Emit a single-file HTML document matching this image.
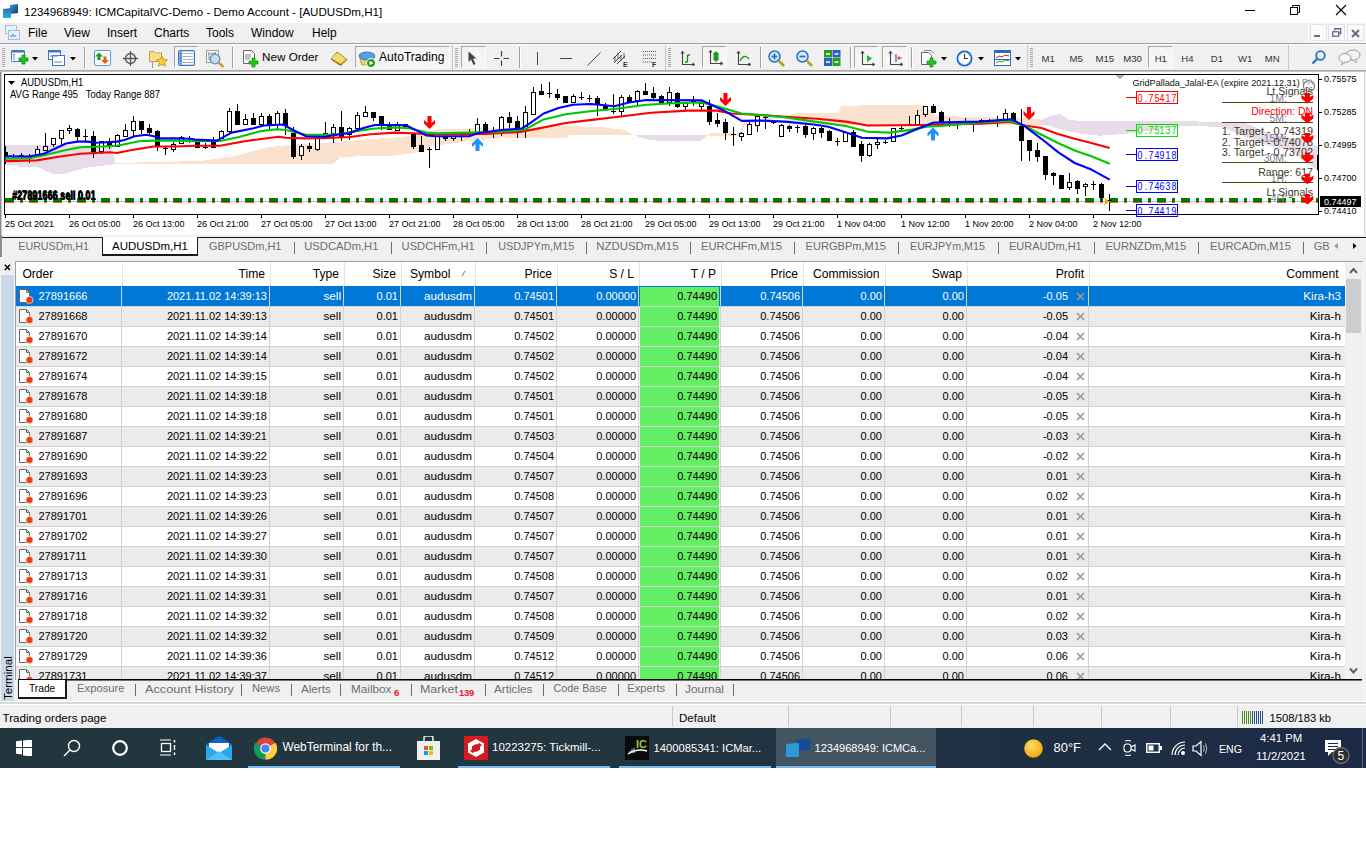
<!DOCTYPE html>
<html><head><meta charset="utf-8"><title>MT4</title>
<style>
html,body{margin:0;padding:0;width:1366px;height:842px;overflow:hidden;background:#fff;}
body{position:relative;font-family:"Liberation Sans",sans-serif;}
.r{position:absolute;display:block;}
.t{position:absolute;line-height:1;white-space:nowrap;}
</style></head><body>
<div class="r" style="left:0px;top:0px;width:1366px;height:23px;background:#fff;"></div><svg class="r" style="left:2px;top:4px" width="17" height="15" viewBox="0 0 17 15">
<defs><linearGradient id="ic1" x1="0" y1="0" x2="1" y2="1"><stop offset="0" stop-color="#4a90d0"/><stop offset="1" stop-color="#0a3a78"/></linearGradient>
<linearGradient id="ic2" x1="0" y1="0" x2="0" y2="1"><stop offset="0" stop-color="#2a70b8"/><stop offset="1" stop-color="#20b0e0"/></linearGradient></defs>
<path d="M8 1 L16 0 L16 9 L8 10 Z" fill="url(#ic1)"/><path d="M1 5 L9 4 L9 14 L1 14 Z" fill="url(#ic2)"/></svg><div class="t" style="top:6.18px;font-size:11.6px;color:#000;font-family:'Liberation Sans',sans-serif;left:24px;">1234968949: ICMCapitalVC-Demo - Demo Account - [AUDUSDm,H1]</div><div class="r" style="left:1245px;top:10px;width:10px;height:1px;background:#000;"></div><svg class="r" style="left:1289px;top:4px" width="12" height="12" viewBox="0 0 12 12"><rect x="1.5" y="3.5" width="7" height="7" fill="none" stroke="#000"/><path d="M3.5 3.5 V1.5 H10.5 V8.5 H8.5" fill="none" stroke="#000"/></svg><svg class="r" style="left:1335px;top:4px" width="12" height="12" viewBox="0 0 12 12"><path d="M1 1 L11 11 M11 1 L1 11" stroke="#000" stroke-width="1.1"/></svg><div class="r" style="left:0px;top:23px;width:1366px;height:20px;background:#f0f0f0;"></div><div class="r" style="left:1308px;top:23px;width:58px;height:20px;background:#f7f7f7;"></div><svg class="r" style="left:5px;top:25px" width="15" height="15" viewBox="0 0 15 15"><rect x="0.5" y="0.5" width="11" height="8" fill="#e8f0fa" stroke="#5a8fd0" stroke-dasharray="1 1"/><rect x="3.5" y="5.5" width="11" height="9" fill="#e8f0fa" stroke="#5a8fd0" stroke-dasharray="1 1"/><path d="M5 10 l1.5 2 l1.5 -3 l1.5 3 l1.5 -2" stroke="#3a6fc0" fill="none" stroke-width="0.8"/></svg><div class="t" style="top:26.84px;font-size:12px;color:#000;font-family:'Liberation Sans',sans-serif;left:28px;">File</div><div class="t" style="top:26.84px;font-size:12px;color:#000;font-family:'Liberation Sans',sans-serif;left:64px;">View</div><div class="t" style="top:26.84px;font-size:12px;color:#000;font-family:'Liberation Sans',sans-serif;left:107px;">Insert</div><div class="t" style="top:26.84px;font-size:12px;color:#000;font-family:'Liberation Sans',sans-serif;left:154px;">Charts</div><div class="t" style="top:26.84px;font-size:12px;color:#000;font-family:'Liberation Sans',sans-serif;left:206px;">Tools</div><div class="t" style="top:26.84px;font-size:12px;color:#000;font-family:'Liberation Sans',sans-serif;left:251px;">Window</div><div class="t" style="top:26.84px;font-size:12px;color:#000;font-family:'Liberation Sans',sans-serif;left:312px;">Help</div><div class="r" style="left:1310px;top:24px;width:17px;height:17px;background:#fafafa;border:1px solid #e3e3e3;box-sizing:border-box;"></div><div class="r" style="left:1328px;top:24px;width:17px;height:17px;background:#fafafa;border:1px solid #e3e3e3;box-sizing:border-box;"></div><div class="r" style="left:1347px;top:24px;width:17px;height:17px;background:#fafafa;border:1px solid #e3e3e3;box-sizing:border-box;"></div><div class="r" style="left:1314px;top:35px;width:6px;height:2px;background:#5b6f86;"></div><svg class="r" style="left:1332px;top:28px" width="10" height="10" viewBox="0 0 10 10"><rect x="0.75" y="3.75" width="6" height="4.5" fill="none" stroke="#5b6f86" stroke-width="1.3"/><path d="M2.75 2.5 V0.75 H8.75 V5.5 H7" fill="none" stroke="#5b6f86" stroke-width="1.3"/></svg><svg class="r" style="left:1351px;top:29px" width="9" height="9" viewBox="0 0 9 9"><path d="M1 1 L8 8 M8 1 L1 8" stroke="#5b6f86" stroke-width="2"/></svg><div class="r" style="left:0px;top:43px;width:1366px;height:1px;background:#a0a0a0;"></div><div class="r" style="left:0px;top:44px;width:1366px;height:1px;background:#fdfdfd;"></div><div class="r" style="left:0px;top:45px;width:1366px;height:25px;background:#f0f0f0;"></div><div class="r" style="left:0px;top:70px;width:1366px;height:1px;background:#a8a8a8;"></div><div class="r" style="left:452px;top:45px;width:1px;height:25px;background:#c8c8c8;"></div><div class="r" style="left:665px;top:45px;width:1px;height:25px;background:#c8c8c8;"></div><div class="r" style="left:1027px;top:45px;width:1px;height:25px;background:#c8c8c8;"></div><div class="r" style="left:1288px;top:45px;width:1px;height:25px;background:#c8c8c8;"></div><div class="r" style="left:2px;top:48px;width:3px;height:1px;background:#a8a8a8;"></div><div class="r" style="left:2px;top:50px;width:3px;height:1px;background:#a8a8a8;"></div><div class="r" style="left:2px;top:52px;width:3px;height:1px;background:#a8a8a8;"></div><div class="r" style="left:2px;top:54px;width:3px;height:1px;background:#a8a8a8;"></div><div class="r" style="left:2px;top:56px;width:3px;height:1px;background:#a8a8a8;"></div><div class="r" style="left:2px;top:58px;width:3px;height:1px;background:#a8a8a8;"></div><div class="r" style="left:2px;top:60px;width:3px;height:1px;background:#a8a8a8;"></div><div class="r" style="left:2px;top:62px;width:3px;height:1px;background:#a8a8a8;"></div><div class="r" style="left:2px;top:64px;width:3px;height:1px;background:#a8a8a8;"></div><div class="r" style="left:2px;top:66px;width:3px;height:1px;background:#a8a8a8;"></div><div class="r" style="left:455px;top:48px;width:3px;height:1px;background:#a8a8a8;"></div><div class="r" style="left:455px;top:50px;width:3px;height:1px;background:#a8a8a8;"></div><div class="r" style="left:455px;top:52px;width:3px;height:1px;background:#a8a8a8;"></div><div class="r" style="left:455px;top:54px;width:3px;height:1px;background:#a8a8a8;"></div><div class="r" style="left:455px;top:56px;width:3px;height:1px;background:#a8a8a8;"></div><div class="r" style="left:455px;top:58px;width:3px;height:1px;background:#a8a8a8;"></div><div class="r" style="left:455px;top:60px;width:3px;height:1px;background:#a8a8a8;"></div><div class="r" style="left:455px;top:62px;width:3px;height:1px;background:#a8a8a8;"></div><div class="r" style="left:455px;top:64px;width:3px;height:1px;background:#a8a8a8;"></div><div class="r" style="left:455px;top:66px;width:3px;height:1px;background:#a8a8a8;"></div><div class="r" style="left:668px;top:48px;width:3px;height:1px;background:#a8a8a8;"></div><div class="r" style="left:668px;top:50px;width:3px;height:1px;background:#a8a8a8;"></div><div class="r" style="left:668px;top:52px;width:3px;height:1px;background:#a8a8a8;"></div><div class="r" style="left:668px;top:54px;width:3px;height:1px;background:#a8a8a8;"></div><div class="r" style="left:668px;top:56px;width:3px;height:1px;background:#a8a8a8;"></div><div class="r" style="left:668px;top:58px;width:3px;height:1px;background:#a8a8a8;"></div><div class="r" style="left:668px;top:60px;width:3px;height:1px;background:#a8a8a8;"></div><div class="r" style="left:668px;top:62px;width:3px;height:1px;background:#a8a8a8;"></div><div class="r" style="left:668px;top:64px;width:3px;height:1px;background:#a8a8a8;"></div><div class="r" style="left:668px;top:66px;width:3px;height:1px;background:#a8a8a8;"></div><div class="r" style="left:1030px;top:48px;width:3px;height:1px;background:#a8a8a8;"></div><div class="r" style="left:1030px;top:50px;width:3px;height:1px;background:#a8a8a8;"></div><div class="r" style="left:1030px;top:52px;width:3px;height:1px;background:#a8a8a8;"></div><div class="r" style="left:1030px;top:54px;width:3px;height:1px;background:#a8a8a8;"></div><div class="r" style="left:1030px;top:56px;width:3px;height:1px;background:#a8a8a8;"></div><div class="r" style="left:1030px;top:58px;width:3px;height:1px;background:#a8a8a8;"></div><div class="r" style="left:1030px;top:60px;width:3px;height:1px;background:#a8a8a8;"></div><div class="r" style="left:1030px;top:62px;width:3px;height:1px;background:#a8a8a8;"></div><div class="r" style="left:1030px;top:64px;width:3px;height:1px;background:#a8a8a8;"></div><div class="r" style="left:1030px;top:66px;width:3px;height:1px;background:#a8a8a8;"></div><svg class="r" style="left:11px;top:50px" width="18" height="16" viewBox="0 0 18 16"><rect x="0.5" y="0.5" width="13" height="11" rx="1" fill="#fff" stroke="#3c78c0"/><rect x="0.5" y="0.5" width="13" height="2" fill="#3c78c0"/><path d="M3 4 V10 M2 5 l1 -1 l1 1" stroke="#6a8ab0" fill="none"/><path d="M11 5 H14 V8 H17 V11 H14 V14 H11 V11 H8 V8 H11 Z" fill="#1ec81e" stroke="#0a8a0a" stroke-width="0.8"/></svg><svg class="r" style="left:32px;top:57px" width="6" height="4" viewBox="0 0 6 4"><path d="M0 0 H6 L3 3.5 Z" fill="#000"/></svg><svg class="r" style="left:48px;top:50px" width="17" height="16" viewBox="0 0 17 16"><rect x="0.5" y="0.5" width="12" height="9" fill="#fff" stroke="#3c78c0"/><rect x="0.5" y="0.5" width="12" height="2" fill="#3c78c0"/><rect x="4.5" y="5.5" width="12" height="10" fill="#fff" stroke="#3c78c0"/><path d="M2 6 H10 M6 12 H14" stroke="#6a8ab0"/></svg><svg class="r" style="left:70px;top:57px" width="6" height="4" viewBox="0 0 6 4"><path d="M0 0 H6 L3 3.5 Z" fill="#000"/></svg><div class="r" style="left:84px;top:47px;width:1px;height:21px;background:#a0a0a0;"></div><div class="r" style="left:85px;top:47px;width:1px;height:21px;background:#ffffff;"></div><svg class="r" style="left:94px;top:50px" width="17" height="16" viewBox="0 0 17 16"><rect x="0.5" y="0.5" width="16" height="15" rx="1.5" fill="#fff" stroke="#5a98dc"/><path d="M9 4 H15 M9 7 H15 M2 11 H7 M2 13.5 H7" stroke="#e0e0e0" stroke-dasharray="1 1"/><path d="M5 2.5 L9 6.5 H6.5 V10 H3.5 V6.5 H1 Z" fill="#18a018"/><path d="M11 14 L15 10 H12.5 V6.5 H9.5 V10 H7 Z" fill="#e85828"/></svg><svg class="r" style="left:123px;top:51px" width="16" height="16" viewBox="0 0 16 16"><circle cx="7.5" cy="7.5" r="5" fill="none" stroke="#555" stroke-width="1.3"/><path d="M7.5 0 V15 M0 7.5 H15" stroke="#555" stroke-width="1.3"/></svg><svg class="r" style="left:149px;top:50px" width="20" height="18" viewBox="0 0 20 18"><path d="M0.5 1.5 h4.5 l1.5 1.5 h6 v8.5 h-12 z" fill="#f8e08a" stroke="#c8a040"/><path d="M3.5 12.5 V17.5" stroke="#444" stroke-dasharray="1 1"/><path d="M13 6 l1.7 3.4 l3.8 .5 l-2.8 2.6 l.7 3.7 l-3.4 -1.8 l-3.4 1.8 l.7 -3.7 l-2.8 -2.6 l3.8 -.5 z" fill="#f8d030" stroke="#b88a10" stroke-width="0.8"/></svg><div class="r" style="left:174px;top:46px;width:25px;height:22px;background:#f7f7f7;border:1px solid #fdfdfd;border-top-color:#a8a8a8;border-left-color:#a8a8a8;box-sizing:border-box;background-image:repeating-linear-gradient(45deg,#efefef 0 1px,#fbfbfb 1px 2px);"></div><svg class="r" style="left:178px;top:50px" width="17" height="16" viewBox="0 0 17 16"><rect x="0.6" y="0.6" width="15.8" height="14.8" rx="1.5" fill="#fff" stroke="#3a74c0" stroke-width="1.2"/><rect x="1.2" y="1.2" width="3" height="13.6" fill="#7aa8e0"/><path d="M2.7 3 V13" stroke="#1a3a70" stroke-dasharray="1 1.5"/><path d="M7 3.5 H15 M7 6.5 H15 M7 9.5 H15 M7 12.5 H15" stroke="#9ab8e0"/><path d="M5.5 3.5 h1 M5.5 9.5 h1" stroke="#e02020"/><path d="M5.5 6.5 h1 M5.5 12.5 h1" stroke="#222"/></svg><svg class="r" style="left:206px;top:50px" width="19" height="18" viewBox="0 0 19 18"><rect x="0.5" y="0.5" width="12" height="12" fill="#f6f6f0" stroke="#a0a090"/><path d="M3 2 V10 M9 2 V9 M2 4 L10 3" stroke="#777" stroke-width="0.8"/><circle cx="9" cy="9" r="4.8" fill="#c8dcf0" stroke="#5a88c0" stroke-width="1.3"/><path d="M12.5 12.5 L17.5 17" stroke="#c8a030" stroke-width="2.4"/></svg><div class="r" style="left:232px;top:47px;width:1px;height:21px;background:#a0a0a0;"></div><div class="r" style="left:233px;top:47px;width:1px;height:21px;background:#ffffff;"></div><svg class="r" style="left:243px;top:50px" width="17" height="18" viewBox="0 0 17 18"><path d="M0.5 0.5 h8 l3 3 v10 h-11 z" fill="#fff" stroke="#666"/><path d="M2 5 h6 M2 7 h6 M2 9 h5" stroke="#888"/><path d="M9 8 H12 V11 H15 V14 H12 V17 H9 V14 H6 V11 H9 Z" fill="#22c822" stroke="#0a8a0a" stroke-width="0.7"/></svg><div class="t" style="top:51.10px;font-size:11.7px;color:#000;font-family:'Liberation Sans',sans-serif;left:262px;">New Order</div><svg class="r" style="left:330px;top:50px" width="18" height="17" viewBox="0 0 18 17"><path d="M1 9 L7 2 L17 9.5 L11 15.5 Z" fill="#d8a020" stroke="#906010" stroke-width="0.8"/><path d="M1.5 8.5 L7 2.5 L16 9 L10.5 13.5 Z" fill="#f4d870"/><path d="M1 9 L11 15.5" stroke="#906010" stroke-width="1"/></svg><div class="r" style="left:355px;top:46px;width:95px;height:22px;background:#f7f7f7;border:1px solid #fdfdfd;border-top-color:#a8a8a8;border-left-color:#a8a8a8;box-sizing:border-box;background-image:repeating-linear-gradient(45deg,#efefef 0 1px,#fbfbfb 1px 2px);"></div><svg class="r" style="left:358px;top:50px" width="18" height="18" viewBox="0 0 18 18"><path d="M2 10 Q2 4 9 4 Q16 4 16 10 L14 15 H4 Z" fill="#f0d060" stroke="#b89020" stroke-width="0.8"/><ellipse cx="9" cy="6" rx="8" ry="4" fill="#5aa0e0" stroke="#2a6ab0" stroke-width="0.8"/><circle cx="13" cy="13" r="4.5" fill="#1aa01a" stroke="#fff"/><path d="M11.5 10.8 L15.5 13 L11.5 15.2 Z" fill="#fff"/></svg><div class="t" style="top:50.76px;font-size:12.1px;color:#000;font-family:'Liberation Sans',sans-serif;left:379px;">AutoTrading</div><div class="r" style="left:461px;top:46px;width:25px;height:22px;background:#f7f7f7;border:1px solid #fdfdfd;border-top-color:#a8a8a8;border-left-color:#a8a8a8;box-sizing:border-box;background-image:repeating-linear-gradient(45deg,#efefef 0 1px,#fbfbfb 1px 2px);"></div><svg class="r" style="left:468px;top:51px" width="10" height="15" viewBox="0 0 10 15"><path d="M0.5 0.5 L0.5 11 L3 8.5 L5.5 14 L7.5 13 L5 7.5 L8.5 7.5 Z" fill="#444"/></svg><svg class="r" style="left:494px;top:51px" width="16" height="16" viewBox="0 0 16 16"><path d="M7.5 0 V5.5 M7.5 9.5 V15 M0 7.5 H5.5 M9.5 7.5 H15" stroke="#444" stroke-width="1.2"/></svg><div class="r" style="left:519px;top:47px;width:1px;height:21px;background:#a0a0a0;"></div><div class="r" style="left:520px;top:47px;width:1px;height:21px;background:#ffffff;"></div><div class="r" style="left:537px;top:52px;width:1px;height:13px;background:#444;"></div><div class="r" style="left:560px;top:58px;width:12px;height:1px;background:#444;"></div><svg class="r" style="left:587px;top:52px" width="14" height="14" viewBox="0 0 14 14"><path d="M0.5 13.5 L13.5 0.5" stroke="#444"/></svg><svg class="r" style="left:612px;top:50px" width="18" height="17" viewBox="0 0 18 17"><path d="M1 9 L9 1 M2 13 L10 5 M5 14 L13 6" stroke="#444" stroke-width="1"/><path d="M3 6 v6 M6 3 v6 M9 5 v6 M12 3 v6" stroke="#444" stroke-width="0.8"/><text x="11" y="16.5" font-size="7" font-family="Liberation Sans" font-weight="bold" fill="#333">E</text></svg><svg class="r" style="left:642px;top:50px" width="16" height="17" viewBox="0 0 16 17"><path d="M1 1.5 H15 M1 5 H15 M1 8.5 H15 M1 12 H10" stroke="#555" stroke-dasharray="1 1"/><text x="10" y="16.5" font-size="7" font-family="Liberation Sans" font-weight="bold" fill="#333">F</text></svg><svg class="r" style="left:680px;top:51px" width="15" height="15" viewBox="0 0 15 15"><path d="M2.5 1 V13.5 H14 M1 2.5 l1.5 -2 l1.5 2 M12.5 12 l2 1.5 l-2 1.5" stroke="#444" fill="none" stroke-width="1.1"/><path d="M7.5 4 V11 M7.5 11 H5 M7.5 4 H10" stroke="#0a9a0a" stroke-width="1.3" fill="none"/></svg><div class="r" style="left:702px;top:46px;width:25px;height:22px;background:#f7f7f7;border:1px solid #fdfdfd;border-top-color:#a8a8a8;border-left-color:#a8a8a8;box-sizing:border-box;background-image:repeating-linear-gradient(45deg,#efefef 0 1px,#fbfbfb 1px 2px);"></div><svg class="r" style="left:708px;top:50px" width="15" height="16" viewBox="0 0 15 16"><path d="M2.5 1 V13.5 H14 M1 2.5 l1.5 -2 l1.5 2 M12.5 12 l2 1.5 l-2 1.5" stroke="#444" fill="none" stroke-width="1.1"/><rect x="6" y="3" width="4" height="7" fill="#20c020" stroke="#0a7a0a" stroke-width="0.8"/><path d="M8 1 V12" stroke="#0a7a0a"/></svg><svg class="r" style="left:736px;top:51px" width="15" height="15" viewBox="0 0 15 15"><path d="M2.5 1 V13.5 H14 M1 2.5 l1.5 -2 l1.5 2 M12.5 12 l2 1.5 l-2 1.5" stroke="#444" fill="none" stroke-width="1.1"/><path d="M4 10 Q8 2 13 8" stroke="#1a9a1a" fill="none" stroke-width="1.3"/></svg><div class="r" style="left:760px;top:47px;width:1px;height:21px;background:#a0a0a0;"></div><div class="r" style="left:761px;top:47px;width:1px;height:21px;background:#ffffff;"></div><svg class="r" style="left:768px;top:50px" width="17" height="17" viewBox="0 0 17 17"><circle cx="6.5" cy="6.5" r="5.5" fill="#d8eafc" stroke="#2a70c0" stroke-width="1.5"/><path d="M11 11 L16 16" stroke="#c89a20" stroke-width="2.6"/><path d="M3.5 6.5 H9.5" stroke="#2a70c0" stroke-width="1.8"/><path d="M6.5 3.5 V9.5" stroke="#2a70c0" stroke-width="1.8"/></svg><svg class="r" style="left:796px;top:50px" width="17" height="17" viewBox="0 0 17 17"><circle cx="6.5" cy="6.5" r="5.5" fill="#d8eafc" stroke="#2a70c0" stroke-width="1.5"/><path d="M11 11 L16 16" stroke="#c89a20" stroke-width="2.6"/><path d="M3.5 6.5 H9.5" stroke="#2a70c0" stroke-width="1.8"/></svg><svg class="r" style="left:824px;top:50px" width="17" height="16" viewBox="0 0 17 16"><rect x="0" y="0" width="8" height="7.5" fill="#22a022"/><rect x="8.5" y="0" width="8" height="7.5" fill="#2a60c8"/><rect x="0" y="8" width="8" height="8" fill="#2a60c8"/><rect x="8.5" y="8" width="8" height="8" fill="#22a022"/><path d="M2 4 H6 M10.5 4 H14.5 M2 12 H6 M10.5 12 H14.5" stroke="#fff" stroke-width="1.5"/></svg><div class="r" style="left:850px;top:47px;width:1px;height:21px;background:#a0a0a0;"></div><div class="r" style="left:851px;top:47px;width:1px;height:21px;background:#ffffff;"></div><div class="r" style="left:854px;top:46px;width:25px;height:22px;background:#f7f7f7;border:1px solid #fdfdfd;border-top-color:#a8a8a8;border-left-color:#a8a8a8;box-sizing:border-box;background-image:repeating-linear-gradient(45deg,#efefef 0 1px,#fbfbfb 1px 2px);"></div><svg class="r" style="left:860px;top:51px" width="15" height="15" viewBox="0 0 15 15"><path d="M2.5 1 V13.5 H14 M1 2.5 l1.5 -2 l1.5 2 M12.5 12 l2 1.5 l-2 1.5" stroke="#444" fill="none" stroke-width="1.1"/><path d="M7 4 L12 7.5 L7 11 Z" fill="#22b022"/></svg><div class="r" style="left:882px;top:46px;width:25px;height:22px;background:#f7f7f7;border:1px solid #fdfdfd;border-top-color:#a8a8a8;border-left-color:#a8a8a8;box-sizing:border-box;background-image:repeating-linear-gradient(45deg,#efefef 0 1px,#fbfbfb 1px 2px);"></div><svg class="r" style="left:888px;top:51px" width="15" height="15" viewBox="0 0 15 15"><path d="M2.5 1 V13.5 H14 M1 2.5 l1.5 -2 l1.5 2 M12.5 12 l2 1.5 l-2 1.5" stroke="#444" fill="none" stroke-width="1.1"/><path d="M8 3 V11" stroke="#2a60c0" stroke-width="1.2"/><path d="M14 7 H10 M11.5 5.5 L10 7 L11.5 8.5" stroke="#e04010" stroke-width="1.2" fill="none"/></svg><div class="r" style="left:911px;top:47px;width:1px;height:21px;background:#a0a0a0;"></div><div class="r" style="left:912px;top:47px;width:1px;height:21px;background:#ffffff;"></div><svg class="r" style="left:921px;top:50px" width="18" height="18" viewBox="0 0 18 18"><path d="M0.5 2.5 h7 l3 3 v9 h-10 z" fill="#fff" stroke="#666"/><path d="M3 0.5 h7 l3 3" fill="none" stroke="#888"/><path d="M9 8 H12 V11 H15 V14 H12 V17 H9 V14 H6 V11 H9 Z" fill="#22c822" stroke="#0a8a0a" stroke-width="0.7"/></svg><svg class="r" style="left:941px;top:57px" width="6" height="4" viewBox="0 0 6 4"><path d="M0 0 H6 L3 3.5 Z" fill="#000"/></svg><svg class="r" style="left:956px;top:50px" width="17" height="17" viewBox="0 0 17 17"><circle cx="8.5" cy="8.5" r="8" fill="#1a6ad0"/><circle cx="8.5" cy="8.5" r="6" fill="#fff" stroke="#a8c8f0"/><path d="M8.5 4 V8.5 H12" stroke="#333" stroke-width="1.1" fill="none"/></svg><svg class="r" style="left:978px;top:57px" width="6" height="4" viewBox="0 0 6 4"><path d="M0 0 H6 L3 3.5 Z" fill="#000"/></svg><svg class="r" style="left:994px;top:50px" width="17" height="16" viewBox="0 0 17 16"><rect x="0.5" y="0.5" width="16" height="15" fill="#fff" stroke="#2a6ac0"/><rect x="0.5" y="0.5" width="16" height="2.5" fill="#2a6ac0"/><path d="M2 8 l3 -2 l3 1 l3 -2 l4 1" stroke="#c02020" fill="none"/><path d="M2 13 l3 -2 l3 1 l3 -2 l4 1" stroke="#20a020" fill="none"/><path d="M1 9.5 H16" stroke="#2a6ac0"/></svg><svg class="r" style="left:1015px;top:57px" width="6" height="4" viewBox="0 0 6 4"><path d="M0 0 H6 L3 3.5 Z" fill="#000"/></svg><div class="t" style="top:53.87px;font-size:9.6px;color:#333;font-family:'Liberation Sans',sans-serif;left:1041.6px;">M1</div><div class="t" style="top:53.87px;font-size:9.6px;color:#333;font-family:'Liberation Sans',sans-serif;left:1069.4px;">M5</div><div class="t" style="top:53.87px;font-size:9.6px;color:#333;font-family:'Liberation Sans',sans-serif;left:1095.5px;">M15</div><div class="t" style="top:53.87px;font-size:9.6px;color:#333;font-family:'Liberation Sans',sans-serif;left:1123.3px;">M30</div><div class="r" style="left:1148px;top:46px;width:25px;height:22px;background:#f7f7f7;border:1px solid #fdfdfd;border-top-color:#a8a8a8;border-left-color:#a8a8a8;box-sizing:border-box;background-image:repeating-linear-gradient(45deg,#efefef 0 1px,#fbfbfb 1px 2px);"></div><div class="t" style="top:53.87px;font-size:9.6px;color:#333;font-family:'Liberation Sans',sans-serif;left:1154.7px;">H1</div><div class="t" style="top:53.87px;font-size:9.6px;color:#333;font-family:'Liberation Sans',sans-serif;left:1181.3px;">H4</div><div class="t" style="top:53.87px;font-size:9.6px;color:#333;font-family:'Liberation Sans',sans-serif;left:1210.8px;">D1</div><div class="t" style="top:53.87px;font-size:9.6px;color:#333;font-family:'Liberation Sans',sans-serif;left:1237.9px;">W1</div><div class="t" style="top:53.87px;font-size:9.6px;color:#333;font-family:'Liberation Sans',sans-serif;left:1264.8px;">MN</div><svg class="r" style="left:1311px;top:50px" width="15" height="15" viewBox="0 0 15 15"><circle cx="9.5" cy="5.5" r="4.3" fill="none" stroke="#2a70d0" stroke-width="1.8"/><path d="M6.5 8.5 L1.5 13.5" stroke="#2a70d0" stroke-width="2.4"/></svg><svg class="r" style="left:1338px;top:49px" width="23" height="16" viewBox="0 0 23 16"><ellipse cx="15" cy="6" rx="7" ry="5" fill="#f4f4f4" stroke="#999"/><path d="M17 10 l2 4 l-4 -3" fill="#f4f4f4" stroke="#999" stroke-width="0.8"/><ellipse cx="7" cy="9" rx="6" ry="4.5" fill="#f8f8f8" stroke="#999"/><path d="M5 13 l-2 3 l4 -2.5" fill="#f8f8f8" stroke="#999" stroke-width="0.8"/></svg><div class="r" style="left:0px;top:71px;width:1366px;height:166px;background:#f0f0f0;"></div><div class="r" style="left:0px;top:71px;width:1366px;height:1px;background:#c4c4c4;"></div><div class="r" style="left:0px;top:72px;width:1px;height:165px;background:#8c8c8c;"></div><div class="r" style="left:1px;top:72px;width:1px;height:165px;background:#c8c8c8;"></div><div class="r" style="left:2px;top:72px;width:1362px;height:163px;background:#ffffff;"></div><div class="r" style="left:1364px;top:72px;width:1px;height:163px;background:#dcdcdc;"></div><svg class="r" style="left:0;top:0" width="1366" height="240" viewBox="0 0 1366 240" shape-rendering="crispEdges"><polygon points="116.0,163.0 200.0,161.0 235.0,156.0 269.0,147.0 303.0,144.0 337.0,142.0 370.0,139.0 404.0,137.0 440.0,129.0 500.0,128.0 560.0,126.0 600.0,127.0 625.0,130.0 633.0,134.5 708.0,134.5 712.0,132.6 739.0,132.6 745.0,121.0 780.0,116.5 799.0,113.0 838.0,112.8 842.0,105.5 860.0,105.5 900.0,105.0 925.0,105.5 935.0,116.0 980.0,117.0 1040.0,118.9 1048.0,123.0 1048.0,124.5 800.0,124.5 780.0,118.0 745.0,125.2 739.0,135.5 708.0,135.5 633.0,134.5 570.0,134.8 566.0,138.4 501.0,138.4 478.0,140.0 434.0,145.7 415.0,153.0 390.0,156.0 341.0,156.7 334.0,164.0 116.0,164.0" fill="#fbe2cf"/><polygon points="5.0,145.2 111.0,145.2 116.0,164.0 84.0,168.0 64.0,174.0 53.0,174.0 38.0,167.4 20.0,167.4 15.0,164.5 5.0,164.5" fill="#e6dde9"/><polygon points="633.0,135.0 708.0,135.0 700.0,141.0 660.0,141.3 645.0,139.0" fill="#e6dde9"/><polygon points="1040.0,120.5 1050.0,116.0 1060.0,114.0 1069.0,119.5 1081.0,121.2 1170.0,121.2 1244.0,122.0 1270.0,134.0 1305.0,140.0 1318.0,147.0 1318.0,171.0 1290.0,150.0 1266.0,145.0 1248.0,138.0 1222.0,127.0 1178.0,125.5 1136.0,133.0 1100.0,135.7 1081.0,134.0 1060.0,129.0 1040.0,123.6" fill="#e6dde9"/><rect x="5" y="201" width="1313" height="1" fill="#c0c0c0"/><rect x="5" y="198" width="9" height="4" fill="#037a03"/><rect x="5" y="202" width="9" height="1" fill="#ff4a10"/><rect x="20" y="198" width="3" height="4" fill="#037a03"/><rect x="20" y="202" width="3" height="1" fill="#ff4a10"/><rect x="29" y="198" width="9" height="4" fill="#037a03"/><rect x="29" y="202" width="9" height="1" fill="#ff4a10"/><rect x="44" y="198" width="3" height="4" fill="#037a03"/><rect x="44" y="202" width="3" height="1" fill="#ff4a10"/><rect x="53" y="198" width="9" height="4" fill="#037a03"/><rect x="53" y="202" width="9" height="1" fill="#ff4a10"/><rect x="68" y="198" width="3" height="4" fill="#037a03"/><rect x="68" y="202" width="3" height="1" fill="#ff4a10"/><rect x="77" y="198" width="9" height="4" fill="#037a03"/><rect x="77" y="202" width="9" height="1" fill="#ff4a10"/><rect x="92" y="198" width="3" height="4" fill="#037a03"/><rect x="92" y="202" width="3" height="1" fill="#ff4a10"/><rect x="101" y="198" width="9" height="4" fill="#037a03"/><rect x="101" y="202" width="9" height="1" fill="#ff4a10"/><rect x="116" y="198" width="3" height="4" fill="#037a03"/><rect x="116" y="202" width="3" height="1" fill="#ff4a10"/><rect x="125" y="198" width="9" height="4" fill="#037a03"/><rect x="125" y="202" width="9" height="1" fill="#ff4a10"/><rect x="140" y="198" width="3" height="4" fill="#037a03"/><rect x="140" y="202" width="3" height="1" fill="#ff4a10"/><rect x="149" y="198" width="9" height="4" fill="#037a03"/><rect x="149" y="202" width="9" height="1" fill="#ff4a10"/><rect x="164" y="198" width="3" height="4" fill="#037a03"/><rect x="164" y="202" width="3" height="1" fill="#ff4a10"/><rect x="173" y="198" width="9" height="4" fill="#037a03"/><rect x="173" y="202" width="9" height="1" fill="#ff4a10"/><rect x="188" y="198" width="3" height="4" fill="#037a03"/><rect x="188" y="202" width="3" height="1" fill="#ff4a10"/><rect x="197" y="198" width="9" height="4" fill="#037a03"/><rect x="197" y="202" width="9" height="1" fill="#ff4a10"/><rect x="212" y="198" width="3" height="4" fill="#037a03"/><rect x="212" y="202" width="3" height="1" fill="#ff4a10"/><rect x="221" y="198" width="9" height="4" fill="#037a03"/><rect x="221" y="202" width="9" height="1" fill="#ff4a10"/><rect x="236" y="198" width="3" height="4" fill="#037a03"/><rect x="236" y="202" width="3" height="1" fill="#ff4a10"/><rect x="245" y="198" width="9" height="4" fill="#037a03"/><rect x="245" y="202" width="9" height="1" fill="#ff4a10"/><rect x="260" y="198" width="3" height="4" fill="#037a03"/><rect x="260" y="202" width="3" height="1" fill="#ff4a10"/><rect x="269" y="198" width="9" height="4" fill="#037a03"/><rect x="269" y="202" width="9" height="1" fill="#ff4a10"/><rect x="284" y="198" width="3" height="4" fill="#037a03"/><rect x="284" y="202" width="3" height="1" fill="#ff4a10"/><rect x="293" y="198" width="9" height="4" fill="#037a03"/><rect x="293" y="202" width="9" height="1" fill="#ff4a10"/><rect x="308" y="198" width="3" height="4" fill="#037a03"/><rect x="308" y="202" width="3" height="1" fill="#ff4a10"/><rect x="317" y="198" width="9" height="4" fill="#037a03"/><rect x="317" y="202" width="9" height="1" fill="#ff4a10"/><rect x="332" y="198" width="3" height="4" fill="#037a03"/><rect x="332" y="202" width="3" height="1" fill="#ff4a10"/><rect x="341" y="198" width="9" height="4" fill="#037a03"/><rect x="341" y="202" width="9" height="1" fill="#ff4a10"/><rect x="356" y="198" width="3" height="4" fill="#037a03"/><rect x="356" y="202" width="3" height="1" fill="#ff4a10"/><rect x="365" y="198" width="9" height="4" fill="#037a03"/><rect x="365" y="202" width="9" height="1" fill="#ff4a10"/><rect x="380" y="198" width="3" height="4" fill="#037a03"/><rect x="380" y="202" width="3" height="1" fill="#ff4a10"/><rect x="389" y="198" width="9" height="4" fill="#037a03"/><rect x="389" y="202" width="9" height="1" fill="#ff4a10"/><rect x="404" y="198" width="3" height="4" fill="#037a03"/><rect x="404" y="202" width="3" height="1" fill="#ff4a10"/><rect x="413" y="198" width="9" height="4" fill="#037a03"/><rect x="413" y="202" width="9" height="1" fill="#ff4a10"/><rect x="428" y="198" width="3" height="4" fill="#037a03"/><rect x="428" y="202" width="3" height="1" fill="#ff4a10"/><rect x="437" y="198" width="9" height="4" fill="#037a03"/><rect x="437" y="202" width="9" height="1" fill="#ff4a10"/><rect x="452" y="198" width="3" height="4" fill="#037a03"/><rect x="452" y="202" width="3" height="1" fill="#ff4a10"/><rect x="461" y="198" width="9" height="4" fill="#037a03"/><rect x="461" y="202" width="9" height="1" fill="#ff4a10"/><rect x="476" y="198" width="3" height="4" fill="#037a03"/><rect x="476" y="202" width="3" height="1" fill="#ff4a10"/><rect x="485" y="198" width="9" height="4" fill="#037a03"/><rect x="485" y="202" width="9" height="1" fill="#ff4a10"/><rect x="500" y="198" width="3" height="4" fill="#037a03"/><rect x="500" y="202" width="3" height="1" fill="#ff4a10"/><rect x="509" y="198" width="9" height="4" fill="#037a03"/><rect x="509" y="202" width="9" height="1" fill="#ff4a10"/><rect x="524" y="198" width="3" height="4" fill="#037a03"/><rect x="524" y="202" width="3" height="1" fill="#ff4a10"/><rect x="533" y="198" width="9" height="4" fill="#037a03"/><rect x="533" y="202" width="9" height="1" fill="#ff4a10"/><rect x="548" y="198" width="3" height="4" fill="#037a03"/><rect x="548" y="202" width="3" height="1" fill="#ff4a10"/><rect x="557" y="198" width="9" height="4" fill="#037a03"/><rect x="557" y="202" width="9" height="1" fill="#ff4a10"/><rect x="572" y="198" width="3" height="4" fill="#037a03"/><rect x="572" y="202" width="3" height="1" fill="#ff4a10"/><rect x="581" y="198" width="9" height="4" fill="#037a03"/><rect x="581" y="202" width="9" height="1" fill="#ff4a10"/><rect x="596" y="198" width="3" height="4" fill="#037a03"/><rect x="596" y="202" width="3" height="1" fill="#ff4a10"/><rect x="605" y="198" width="9" height="4" fill="#037a03"/><rect x="605" y="202" width="9" height="1" fill="#ff4a10"/><rect x="620" y="198" width="3" height="4" fill="#037a03"/><rect x="620" y="202" width="3" height="1" fill="#ff4a10"/><rect x="629" y="198" width="9" height="4" fill="#037a03"/><rect x="629" y="202" width="9" height="1" fill="#ff4a10"/><rect x="644" y="198" width="3" height="4" fill="#037a03"/><rect x="644" y="202" width="3" height="1" fill="#ff4a10"/><rect x="653" y="198" width="9" height="4" fill="#037a03"/><rect x="653" y="202" width="9" height="1" fill="#ff4a10"/><rect x="668" y="198" width="3" height="4" fill="#037a03"/><rect x="668" y="202" width="3" height="1" fill="#ff4a10"/><rect x="677" y="198" width="9" height="4" fill="#037a03"/><rect x="677" y="202" width="9" height="1" fill="#ff4a10"/><rect x="692" y="198" width="3" height="4" fill="#037a03"/><rect x="692" y="202" width="3" height="1" fill="#ff4a10"/><rect x="701" y="198" width="9" height="4" fill="#037a03"/><rect x="701" y="202" width="9" height="1" fill="#ff4a10"/><rect x="716" y="198" width="3" height="4" fill="#037a03"/><rect x="716" y="202" width="3" height="1" fill="#ff4a10"/><rect x="725" y="198" width="9" height="4" fill="#037a03"/><rect x="725" y="202" width="9" height="1" fill="#ff4a10"/><rect x="740" y="198" width="3" height="4" fill="#037a03"/><rect x="740" y="202" width="3" height="1" fill="#ff4a10"/><rect x="749" y="198" width="9" height="4" fill="#037a03"/><rect x="749" y="202" width="9" height="1" fill="#ff4a10"/><rect x="764" y="198" width="3" height="4" fill="#037a03"/><rect x="764" y="202" width="3" height="1" fill="#ff4a10"/><rect x="773" y="198" width="9" height="4" fill="#037a03"/><rect x="773" y="202" width="9" height="1" fill="#ff4a10"/><rect x="788" y="198" width="3" height="4" fill="#037a03"/><rect x="788" y="202" width="3" height="1" fill="#ff4a10"/><rect x="797" y="198" width="9" height="4" fill="#037a03"/><rect x="797" y="202" width="9" height="1" fill="#ff4a10"/><rect x="812" y="198" width="3" height="4" fill="#037a03"/><rect x="812" y="202" width="3" height="1" fill="#ff4a10"/><rect x="821" y="198" width="9" height="4" fill="#037a03"/><rect x="821" y="202" width="9" height="1" fill="#ff4a10"/><rect x="836" y="198" width="3" height="4" fill="#037a03"/><rect x="836" y="202" width="3" height="1" fill="#ff4a10"/><rect x="845" y="198" width="9" height="4" fill="#037a03"/><rect x="845" y="202" width="9" height="1" fill="#ff4a10"/><rect x="860" y="198" width="3" height="4" fill="#037a03"/><rect x="860" y="202" width="3" height="1" fill="#ff4a10"/><rect x="869" y="198" width="9" height="4" fill="#037a03"/><rect x="869" y="202" width="9" height="1" fill="#ff4a10"/><rect x="884" y="198" width="3" height="4" fill="#037a03"/><rect x="884" y="202" width="3" height="1" fill="#ff4a10"/><rect x="893" y="198" width="9" height="4" fill="#037a03"/><rect x="893" y="202" width="9" height="1" fill="#ff4a10"/><rect x="908" y="198" width="3" height="4" fill="#037a03"/><rect x="908" y="202" width="3" height="1" fill="#ff4a10"/><rect x="917" y="198" width="9" height="4" fill="#037a03"/><rect x="917" y="202" width="9" height="1" fill="#ff4a10"/><rect x="932" y="198" width="3" height="4" fill="#037a03"/><rect x="932" y="202" width="3" height="1" fill="#ff4a10"/><rect x="941" y="198" width="9" height="4" fill="#037a03"/><rect x="941" y="202" width="9" height="1" fill="#ff4a10"/><rect x="956" y="198" width="3" height="4" fill="#037a03"/><rect x="956" y="202" width="3" height="1" fill="#ff4a10"/><rect x="965" y="198" width="9" height="4" fill="#037a03"/><rect x="965" y="202" width="9" height="1" fill="#ff4a10"/><rect x="980" y="198" width="3" height="4" fill="#037a03"/><rect x="980" y="202" width="3" height="1" fill="#ff4a10"/><rect x="989" y="198" width="9" height="4" fill="#037a03"/><rect x="989" y="202" width="9" height="1" fill="#ff4a10"/><rect x="1004" y="198" width="3" height="4" fill="#037a03"/><rect x="1004" y="202" width="3" height="1" fill="#ff4a10"/><rect x="1013" y="198" width="9" height="4" fill="#037a03"/><rect x="1013" y="202" width="9" height="1" fill="#ff4a10"/><rect x="1028" y="198" width="3" height="4" fill="#037a03"/><rect x="1028" y="202" width="3" height="1" fill="#ff4a10"/><rect x="1037" y="198" width="9" height="4" fill="#037a03"/><rect x="1037" y="202" width="9" height="1" fill="#ff4a10"/><rect x="1052" y="198" width="3" height="4" fill="#037a03"/><rect x="1052" y="202" width="3" height="1" fill="#ff4a10"/><rect x="1061" y="198" width="9" height="4" fill="#037a03"/><rect x="1061" y="202" width="9" height="1" fill="#ff4a10"/><rect x="1076" y="198" width="3" height="4" fill="#037a03"/><rect x="1076" y="202" width="3" height="1" fill="#ff4a10"/><rect x="1085" y="198" width="9" height="4" fill="#037a03"/><rect x="1085" y="202" width="9" height="1" fill="#ff4a10"/><rect x="1100" y="198" width="3" height="4" fill="#037a03"/><rect x="1100" y="202" width="3" height="1" fill="#ff4a10"/><rect x="1109" y="198" width="9" height="4" fill="#037a03"/><rect x="1109" y="202" width="9" height="1" fill="#ff4a10"/><rect x="1124" y="198" width="3" height="4" fill="#037a03"/><rect x="1124" y="202" width="3" height="1" fill="#ff4a10"/><rect x="1133" y="198" width="9" height="4" fill="#037a03"/><rect x="1133" y="202" width="9" height="1" fill="#ff4a10"/><rect x="1148" y="198" width="3" height="4" fill="#037a03"/><rect x="1148" y="202" width="3" height="1" fill="#ff4a10"/><rect x="1157" y="198" width="9" height="4" fill="#037a03"/><rect x="1157" y="202" width="9" height="1" fill="#ff4a10"/><rect x="1172" y="198" width="3" height="4" fill="#037a03"/><rect x="1172" y="202" width="3" height="1" fill="#ff4a10"/><rect x="1181" y="198" width="9" height="4" fill="#037a03"/><rect x="1181" y="202" width="9" height="1" fill="#ff4a10"/><rect x="1196" y="198" width="3" height="4" fill="#037a03"/><rect x="1196" y="202" width="3" height="1" fill="#ff4a10"/><rect x="1205" y="198" width="9" height="4" fill="#037a03"/><rect x="1205" y="202" width="9" height="1" fill="#ff4a10"/><rect x="1220" y="198" width="3" height="4" fill="#037a03"/><rect x="1220" y="202" width="3" height="1" fill="#ff4a10"/><rect x="1229" y="198" width="9" height="4" fill="#037a03"/><rect x="1229" y="202" width="9" height="1" fill="#ff4a10"/><rect x="1244" y="198" width="3" height="4" fill="#037a03"/><rect x="1244" y="202" width="3" height="1" fill="#ff4a10"/><rect x="1253" y="198" width="9" height="4" fill="#037a03"/><rect x="1253" y="202" width="9" height="1" fill="#ff4a10"/><rect x="1268" y="198" width="3" height="4" fill="#037a03"/><rect x="1268" y="202" width="3" height="1" fill="#ff4a10"/><rect x="1277" y="198" width="9" height="4" fill="#037a03"/><rect x="1277" y="202" width="9" height="1" fill="#ff4a10"/><rect x="1292" y="198" width="3" height="4" fill="#037a03"/><rect x="1292" y="202" width="3" height="1" fill="#ff4a10"/><rect x="1301" y="198" width="9" height="4" fill="#037a03"/><rect x="1301" y="202" width="9" height="1" fill="#ff4a10"/><rect x="1316" y="198" width="2" height="4" fill="#037a03"/><rect x="1316" y="202" width="2" height="1" fill="#ff4a10"/><defs><clipPath id="pc"><rect x="5" y="75" width="1313" height="139"/></clipPath></defs><g fill="#000" clip-path="url(#pc)"><rect x="5" y="146" width="1" height="18"/><rect x="3" y="152" width="5" height="4"/><rect x="13" y="154" width="1" height="4"/><rect x="11" y="156" width="5" height="1"/><rect x="21" y="153" width="1" height="5"/><rect x="19" y="155" width="5" height="1"/><rect x="29" y="154" width="1" height="9"/><rect x="27" y="158" width="5" height="1"/><rect x="37" y="146" width="1" height="9"/><rect x="35" y="149" width="5" height="6"/><rect x="36" y="150" width="3" height="4" fill="#fff"/><rect x="45" y="133" width="1" height="17"/><rect x="43" y="146" width="5" height="5"/><rect x="44" y="147" width="3" height="3" fill="#fff"/><rect x="53" y="138" width="1" height="9"/><rect x="51" y="138" width="5" height="7"/><rect x="52" y="139" width="3" height="5" fill="#fff"/><rect x="61" y="130" width="1" height="16"/><rect x="59" y="130" width="5" height="9"/><rect x="60" y="131" width="3" height="7" fill="#fff"/><rect x="69" y="125" width="1" height="9"/><rect x="67" y="128" width="5" height="3"/><rect x="68" y="129" width="3" height="1" fill="#fff"/><rect x="77" y="128" width="1" height="13"/><rect x="75" y="129" width="5" height="8"/><rect x="85" y="129" width="1" height="12"/><rect x="83" y="136" width="5" height="1"/><rect x="93" y="131" width="1" height="27"/><rect x="91" y="136" width="5" height="16"/><rect x="101" y="141" width="1" height="13"/><rect x="99" y="141" width="5" height="11"/><rect x="100" y="142" width="3" height="9" fill="#fff"/><rect x="109" y="138" width="1" height="11"/><rect x="107" y="141" width="5" height="6"/><rect x="117" y="134" width="1" height="13"/><rect x="115" y="135" width="5" height="12"/><rect x="116" y="136" width="3" height="10" fill="#fff"/><rect x="125" y="124" width="1" height="12"/><rect x="123" y="130" width="5" height="7"/><rect x="124" y="131" width="3" height="5" fill="#fff"/><rect x="133" y="116" width="1" height="20"/><rect x="131" y="121" width="5" height="10"/><rect x="132" y="122" width="3" height="8" fill="#fff"/><rect x="141" y="121" width="1" height="13"/><rect x="139" y="121" width="5" height="9"/><rect x="149" y="124" width="1" height="12"/><rect x="147" y="128" width="5" height="5"/><rect x="157" y="130" width="1" height="21"/><rect x="155" y="131" width="5" height="16"/><rect x="165" y="146" width="1" height="9"/><rect x="163" y="148" width="5" height="1"/><rect x="173" y="142" width="1" height="10"/><rect x="171" y="144" width="5" height="6"/><rect x="172" y="145" width="3" height="4" fill="#fff"/><rect x="181" y="136" width="1" height="8"/><rect x="179" y="137" width="5" height="7"/><rect x="180" y="138" width="3" height="5" fill="#fff"/><rect x="189" y="136" width="1" height="7"/><rect x="187" y="138" width="5" height="1"/><rect x="197" y="141" width="1" height="7"/><rect x="195" y="141" width="5" height="7"/><rect x="205" y="143" width="1" height="6"/><rect x="203" y="147" width="5" height="1"/><rect x="213" y="137" width="1" height="11"/><rect x="211" y="141" width="5" height="7"/><rect x="221" y="130" width="1" height="9"/><rect x="219" y="131" width="5" height="8"/><rect x="220" y="132" width="3" height="6" fill="#fff"/><rect x="229" y="108" width="1" height="25"/><rect x="227" y="111" width="5" height="21"/><rect x="228" y="112" width="3" height="19" fill="#fff"/><rect x="237" y="104" width="1" height="20"/><rect x="235" y="111" width="5" height="14"/><rect x="245" y="114" width="1" height="10"/><rect x="243" y="119" width="5" height="6"/><rect x="244" y="120" width="3" height="4" fill="#fff"/><rect x="253" y="113" width="1" height="11"/><rect x="251" y="118" width="5" height="7"/><rect x="261" y="113" width="1" height="12"/><rect x="259" y="116" width="5" height="9"/><rect x="260" y="117" width="3" height="7" fill="#fff"/><rect x="269" y="114" width="1" height="16"/><rect x="267" y="116" width="5" height="10"/><rect x="277" y="111" width="1" height="18"/><rect x="275" y="113" width="5" height="12"/><rect x="276" y="114" width="3" height="10" fill="#fff"/><rect x="285" y="109" width="1" height="26"/><rect x="283" y="113" width="5" height="13"/><rect x="293" y="127" width="1" height="32"/><rect x="291" y="133" width="5" height="24"/><rect x="301" y="144" width="1" height="16"/><rect x="299" y="146" width="5" height="10"/><rect x="300" y="147" width="3" height="8" fill="#fff"/><rect x="309" y="143" width="1" height="9"/><rect x="307" y="146" width="5" height="3"/><rect x="317" y="136" width="1" height="15"/><rect x="315" y="137" width="5" height="13"/><rect x="316" y="138" width="3" height="11" fill="#fff"/><rect x="325" y="122" width="1" height="16"/><rect x="323" y="133" width="5" height="5"/><rect x="324" y="134" width="3" height="3" fill="#fff"/><rect x="333" y="124" width="1" height="19"/><rect x="331" y="127" width="5" height="7"/><rect x="332" y="128" width="3" height="5" fill="#fff"/><rect x="341" y="111" width="1" height="30"/><rect x="339" y="127" width="5" height="11"/><rect x="349" y="127" width="1" height="13"/><rect x="347" y="128" width="5" height="7"/><rect x="348" y="129" width="3" height="5" fill="#fff"/><rect x="357" y="112" width="1" height="16"/><rect x="355" y="115" width="5" height="14"/><rect x="356" y="116" width="3" height="12" fill="#fff"/><rect x="365" y="106" width="1" height="11"/><rect x="363" y="112" width="5" height="5"/><rect x="364" y="113" width="3" height="3" fill="#fff"/><rect x="373" y="112" width="1" height="9"/><rect x="371" y="112" width="5" height="6"/><rect x="381" y="116" width="1" height="14"/><rect x="379" y="116" width="5" height="9"/><rect x="389" y="122" width="1" height="8"/><rect x="387" y="124" width="5" height="6"/><rect x="397" y="122" width="1" height="9"/><rect x="395" y="124" width="5" height="7"/><rect x="396" y="125" width="3" height="5" fill="#fff"/><rect x="405" y="124" width="1" height="3"/><rect x="403" y="124" width="5" height="3"/><rect x="413" y="133" width="1" height="16"/><rect x="411" y="134" width="5" height="13"/><rect x="421" y="136" width="1" height="16"/><rect x="419" y="145" width="5" height="7"/><rect x="429" y="147" width="1" height="21"/><rect x="427" y="149" width="5" height="1"/><rect x="437" y="136" width="1" height="14"/><rect x="435" y="136" width="5" height="14"/><rect x="436" y="137" width="3" height="12" fill="#fff"/><rect x="445" y="136" width="1" height="5"/><rect x="443" y="136" width="5" height="3"/><rect x="453" y="136" width="1" height="5"/><rect x="451" y="136" width="5" height="3"/><rect x="452" y="137" width="3" height="1" fill="#fff"/><rect x="461" y="133" width="1" height="8"/><rect x="459" y="136" width="5" height="1"/><rect x="469" y="129" width="1" height="8"/><rect x="467" y="133" width="5" height="1"/><rect x="477" y="118" width="1" height="15"/><rect x="475" y="124" width="5" height="10"/><rect x="476" y="125" width="3" height="8" fill="#fff"/><rect x="485" y="122" width="1" height="11"/><rect x="483" y="124" width="5" height="9"/><rect x="493" y="127" width="1" height="11"/><rect x="491" y="132" width="5" height="1"/><rect x="501" y="116" width="1" height="20"/><rect x="499" y="117" width="5" height="14"/><rect x="500" y="118" width="3" height="12" fill="#fff"/><rect x="509" y="112" width="1" height="16"/><rect x="507" y="117" width="5" height="6"/><rect x="517" y="116" width="1" height="22"/><rect x="515" y="121" width="5" height="8"/><rect x="525" y="106" width="1" height="32"/><rect x="523" y="112" width="5" height="19"/><rect x="524" y="113" width="3" height="17" fill="#fff"/><rect x="533" y="87" width="1" height="27"/><rect x="531" y="92" width="5" height="23"/><rect x="532" y="93" width="3" height="21" fill="#fff"/><rect x="541" y="84" width="1" height="10"/><rect x="539" y="91" width="5" height="4"/><rect x="549" y="82" width="1" height="16"/><rect x="547" y="93" width="5" height="1"/><rect x="557" y="89" width="1" height="11"/><rect x="555" y="94" width="5" height="4"/><rect x="565" y="96" width="1" height="6"/><rect x="563" y="96" width="5" height="7"/><rect x="573" y="94" width="1" height="9"/><rect x="571" y="96" width="5" height="7"/><rect x="572" y="97" width="3" height="5" fill="#fff"/><rect x="581" y="92" width="1" height="8"/><rect x="579" y="97" width="5" height="1"/><rect x="589" y="95" width="1" height="7"/><rect x="587" y="98" width="5" height="1"/><rect x="597" y="96" width="1" height="20"/><rect x="595" y="98" width="5" height="6"/><rect x="605" y="103" width="1" height="8"/><rect x="603" y="105" width="5" height="4"/><rect x="613" y="94" width="1" height="20"/><rect x="611" y="111" width="5" height="1"/><rect x="621" y="95" width="1" height="22"/><rect x="619" y="97" width="5" height="15"/><rect x="620" y="98" width="3" height="13" fill="#fff"/><rect x="629" y="95" width="1" height="7"/><rect x="627" y="97" width="5" height="5"/><rect x="637" y="90" width="1" height="16"/><rect x="635" y="91" width="5" height="10"/><rect x="636" y="92" width="3" height="8" fill="#fff"/><rect x="645" y="83" width="1" height="11"/><rect x="643" y="91" width="5" height="4"/><rect x="653" y="87" width="1" height="14"/><rect x="651" y="93" width="5" height="5"/><rect x="661" y="95" width="1" height="8"/><rect x="659" y="96" width="5" height="7"/><rect x="669" y="87" width="1" height="19"/><rect x="667" y="92" width="5" height="11"/><rect x="668" y="93" width="3" height="9" fill="#fff"/><rect x="677" y="92" width="1" height="16"/><rect x="675" y="93" width="5" height="14"/><rect x="685" y="102" width="1" height="9"/><rect x="683" y="103" width="5" height="4"/><rect x="684" y="104" width="3" height="2" fill="#fff"/><rect x="693" y="96" width="1" height="10"/><rect x="691" y="101" width="5" height="1"/><rect x="701" y="100" width="1" height="10"/><rect x="699" y="103" width="5" height="4"/><rect x="700" y="104" width="3" height="2" fill="#fff"/><rect x="709" y="100" width="1" height="25"/><rect x="707" y="106" width="5" height="16"/><rect x="717" y="113" width="1" height="14"/><rect x="715" y="120" width="5" height="4"/><rect x="725" y="119" width="1" height="21"/><rect x="723" y="122" width="5" height="11"/><rect x="733" y="127" width="1" height="19"/><rect x="731" y="134" width="5" height="1"/><rect x="741" y="132" width="1" height="9"/><rect x="739" y="133" width="5" height="4"/><rect x="740" y="134" width="3" height="2" fill="#fff"/><rect x="749" y="122" width="1" height="13"/><rect x="747" y="124" width="5" height="11"/><rect x="748" y="125" width="3" height="9" fill="#fff"/><rect x="757" y="116" width="1" height="16"/><rect x="755" y="116" width="5" height="10"/><rect x="756" y="117" width="3" height="8" fill="#fff"/><rect x="765" y="116" width="1" height="13"/><rect x="763" y="117" width="5" height="1"/><rect x="773" y="120" width="1" height="4"/><rect x="771" y="122" width="5" height="1"/><rect x="781" y="124" width="1" height="13"/><rect x="779" y="125" width="5" height="12"/><rect x="780" y="126" width="3" height="10" fill="#fff"/><rect x="789" y="125" width="1" height="7"/><rect x="787" y="126" width="5" height="3"/><rect x="797" y="125" width="1" height="8"/><rect x="795" y="127" width="5" height="1"/><rect x="805" y="125" width="1" height="13"/><rect x="803" y="126" width="5" height="9"/><rect x="813" y="127" width="1" height="13"/><rect x="811" y="128" width="5" height="6"/><rect x="812" y="129" width="3" height="4" fill="#fff"/><rect x="821" y="127" width="1" height="11"/><rect x="819" y="128" width="5" height="5"/><rect x="829" y="130" width="1" height="11"/><rect x="827" y="131" width="5" height="10"/><rect x="837" y="138" width="1" height="8"/><rect x="835" y="141" width="5" height="1"/><rect x="845" y="131" width="1" height="11"/><rect x="843" y="132" width="5" height="10"/><rect x="844" y="133" width="3" height="8" fill="#fff"/><rect x="853" y="130" width="1" height="16"/><rect x="851" y="132" width="5" height="15"/><rect x="861" y="141" width="1" height="21"/><rect x="859" y="144" width="5" height="12"/><rect x="869" y="143" width="1" height="14"/><rect x="867" y="144" width="5" height="12"/><rect x="868" y="145" width="3" height="10" fill="#fff"/><rect x="877" y="137" width="1" height="12"/><rect x="875" y="142" width="5" height="3"/><rect x="876" y="143" width="3" height="1" fill="#fff"/><rect x="885" y="140" width="1" height="4"/><rect x="883" y="142" width="5" height="1"/><rect x="893" y="128" width="1" height="14"/><rect x="891" y="128" width="5" height="14"/><rect x="892" y="129" width="3" height="12" fill="#fff"/><rect x="901" y="124" width="1" height="6"/><rect x="899" y="128" width="5" height="1"/><rect x="909" y="116" width="1" height="9"/><rect x="907" y="124" width="5" height="1"/><rect x="917" y="110" width="1" height="14"/><rect x="915" y="115" width="5" height="10"/><rect x="916" y="116" width="3" height="8" fill="#fff"/><rect x="925" y="106" width="1" height="11"/><rect x="923" y="106" width="5" height="9"/><rect x="924" y="107" width="3" height="7" fill="#fff"/><rect x="933" y="104" width="1" height="9"/><rect x="931" y="106" width="5" height="7"/><rect x="941" y="111" width="1" height="11"/><rect x="939" y="112" width="5" height="11"/><rect x="949" y="118" width="1" height="9"/><rect x="947" y="122" width="5" height="1"/><rect x="957" y="122" width="1" height="7"/><rect x="955" y="124" width="5" height="1"/><rect x="965" y="118" width="1" height="5"/><rect x="963" y="122" width="5" height="1"/><rect x="973" y="121" width="1" height="11"/><rect x="971" y="122" width="5" height="1"/><rect x="981" y="119" width="1" height="3"/><rect x="979" y="120" width="5" height="1"/><rect x="989" y="119" width="1" height="2"/><rect x="987" y="120" width="5" height="1"/><rect x="997" y="116" width="1" height="11"/><rect x="995" y="122" width="5" height="1"/><rect x="1005" y="109" width="1" height="11"/><rect x="1003" y="113" width="5" height="8"/><rect x="1004" y="114" width="3" height="6" fill="#fff"/><rect x="1013" y="112" width="1" height="10"/><rect x="1011" y="113" width="5" height="9"/><rect x="1021" y="109" width="1" height="52"/><rect x="1019" y="126" width="5" height="15"/><rect x="1029" y="140" width="1" height="21"/><rect x="1027" y="140" width="5" height="11"/><rect x="1037" y="143" width="1" height="19"/><rect x="1035" y="150" width="5" height="7"/><rect x="1045" y="156" width="1" height="24"/><rect x="1043" y="156" width="5" height="19"/><rect x="1053" y="172" width="1" height="13"/><rect x="1051" y="173" width="5" height="3"/><rect x="1061" y="175" width="1" height="14"/><rect x="1059" y="175" width="5" height="14"/><rect x="1069" y="173" width="1" height="17"/><rect x="1067" y="182" width="5" height="6"/><rect x="1068" y="183" width="3" height="4" fill="#fff"/><rect x="1077" y="180" width="1" height="14"/><rect x="1075" y="181" width="5" height="8"/><rect x="1085" y="183" width="1" height="13"/><rect x="1083" y="184" width="5" height="3"/><rect x="1084" y="185" width="3" height="1" fill="#fff"/><rect x="1093" y="181" width="1" height="9"/><rect x="1091" y="184" width="5" height="1"/><rect x="1101" y="183" width="1" height="18"/><rect x="1099" y="184" width="5" height="14"/><rect x="1109" y="194" width="1" height="17"/><rect x="1107" y="200" width="5" height="1"/></g><polyline points="5.0,161.1 36.6,160.4 58.6,156.7 80.5,153.8 110.0,152.3 117.0,153.0 131.8,150.0 153.7,146.5 175.7,146.5 195.0,145.7 220.0,145.7 246.0,141.0 278.5,136.7 285.8,137.7 304.8,138.4 326.8,138.0 350.0,137.0 370.7,134.3 395.0,132.6 412.0,133.3 426.6,134.0 485.0,134.0 521.8,131.8 536.4,128.9 565.7,123.0 590.0,120.1 614.3,117.2 651.0,112.8 687.5,110.6 716.8,110.6 731.4,113.5 760.7,115.0 785.0,116.8 816.6,118.7 845.9,121.6 867.8,125.5 926.4,125.0 980.0,123.8 1010.0,122.0 1024.9,125.5 1041.5,128.0 1058.0,133.9 1074.7,138.8 1091.4,143.0 1109.7,148.0" fill="none" stroke="#ff0000" stroke-width="2.1" stroke-linejoin="round" shape-rendering="geometricPrecision"/><polyline points="5.0,158.6 29.0,158.2 44.0,155.3 66.0,150.0 80.5,147.2 102.5,146.5 117.0,145.7 139.0,141.3 153.7,140.6 175.7,140.6 195.0,141.3 220.0,141.0 239.0,137.0 261.0,131.1 277.0,129.3 285.8,130.0 306.0,134.8 326.8,134.8 341.0,134.0 356.0,131.1 375.0,128.5 395.0,127.4 409.0,128.2 426.6,132.6 436.8,133.3 501.0,131.8 524.7,129.6 543.7,119.4 565.7,114.3 590.0,111.3 614.3,109.0 646.5,104.7 672.8,103.3 702.0,102.5 716.8,106.2 731.4,110.6 741.7,113.5 760.7,115.0 785.0,117.2 809.3,120.9 845.9,126.0 867.8,131.8 889.8,132.6 911.8,129.6 926.4,126.7 941.0,126.0 980.0,122.5 1010.0,121.0 1024.9,125.9 1041.5,134.7 1058.0,143.0 1074.7,150.5 1091.4,156.3 1109.7,163.8" fill="none" stroke="#00c800" stroke-width="2.1" stroke-linejoin="round" shape-rendering="geometricPrecision"/><polyline points="5.0,156.2 29.0,156.5 44.0,153.8 66.0,143.5 77.6,141.6 88.0,141.6 93.7,142.8 102.5,142.5 117.0,141.6 124.5,140.0 134.7,136.2 146.4,134.8 153.7,136.2 161.0,138.4 175.7,138.4 190.0,138.7 195.0,139.6 217.0,140.6 231.6,132.6 253.6,128.2 263.8,125.5 283.0,124.5 293.0,130.0 306.0,136.2 325.0,136.7 341.4,134.0 348.7,133.3 363.4,127.9 375.0,125.0 395.0,125.0 406.0,125.2 415.0,129.6 426.6,135.5 435.4,136.2 469.0,136.2 477.8,133.3 501.0,130.0 521.8,128.5 529.0,123.8 543.7,113.5 558.4,108.0 573.0,104.7 590.0,104.0 599.6,104.7 614.3,106.2 629.0,102.5 646.5,100.0 702.0,100.4 709.5,104.0 724.0,110.6 741.7,120.9 760.7,120.6 785.0,121.6 813.7,124.5 828.3,126.7 841.5,131.1 862.0,137.7 886.9,138.4 901.5,135.5 919.0,128.2 933.7,122.6 980.0,121.6 1011.6,119.2 1024.9,126.4 1041.5,138.8 1058.0,152.1 1074.7,163.0 1091.4,169.6 1109.7,179.6" fill="none" stroke="#0000ff" stroke-width="2.1" stroke-linejoin="round" shape-rendering="geometricPrecision"/><path d="M427.5 116 h4 v7 l3.5 -3 v3.5 l-5.5 5.5 l-5.5 -5.5 v-3.5 l3.5 3 z" fill="#ff0000" shape-rendering="geometricPrecision"/><path d="M723.5 93 h4 v7 l3.5 -3 v3.5 l-5.5 5.5 l-5.5 -5.5 v-3.5 l3.5 3 z" fill="#ff0000" shape-rendering="geometricPrecision"/><path d="M1027 107 h4 v7 l3.5 -3 v3.5 l-5.5 5.5 l-5.5 -5.5 v-3.5 l3.5 3 z" fill="#ff0000" shape-rendering="geometricPrecision"/><path d="M475.5 151 h4 v-7 l3.5 3 v-3.5 l-5.5 -5.5 l-5.5 5.5 v3.5 l3.5 -3 z" fill="#1e90ff" shape-rendering="geometricPrecision"/><path d="M931 140.5 h4 v-7 l3.5 3 v-3.5 l-5.5 -5.5 l-5.5 5.5 v3.5 l3.5 -3 z" fill="#1e90ff" shape-rendering="geometricPrecision"/><path d="M1104 198 l6 3.5 l-6 3.5 l1.5 -3.5 z" fill="#ffa500"/><path d="M1115 75 h9 l-4.5 4.5 z" fill="#b0b0b0"/><rect x="1222" y="102.0" width="91" height="1.3" fill="#4e4a1e"/><rect x="1222" y="122.0" width="91" height="1.3" fill="#4e4a1e"/><rect x="1222" y="162.0" width="91" height="1.3" fill="#4e4a1e"/><rect x="1222" y="182.0" width="91" height="1.3" fill="#4e4a1e"/><rect x="1317" y="155" width="2" height="15" fill="#000"/><rect x="4.5" y="74.5" width="1313.5" height="139.5" fill="none" stroke="#000" stroke-width="1"/><rect x="1319" y="79" width="3" height="1" fill="#000"/><rect x="1319" y="112" width="3" height="1" fill="#000"/><rect x="1319" y="145" width="3" height="1" fill="#000"/><rect x="1319" y="178" width="3" height="1" fill="#000"/><rect x="1319" y="211" width="3" height="1" fill="#000"/><rect x="5" y="214" width="1" height="4" fill="#000"/><rect x="69" y="214" width="1" height="4" fill="#000"/><rect x="133" y="214" width="1" height="4" fill="#000"/><rect x="197" y="214" width="1" height="4" fill="#000"/><rect x="261" y="214" width="1" height="4" fill="#000"/><rect x="325" y="214" width="1" height="4" fill="#000"/><rect x="389" y="214" width="1" height="4" fill="#000"/><rect x="453" y="214" width="1" height="4" fill="#000"/><rect x="517" y="214" width="1" height="4" fill="#000"/><rect x="581" y="214" width="1" height="4" fill="#000"/><rect x="645" y="214" width="1" height="4" fill="#000"/><rect x="709" y="214" width="1" height="4" fill="#000"/><rect x="773" y="214" width="1" height="4" fill="#000"/><rect x="837" y="214" width="1" height="4" fill="#000"/><rect x="901" y="214" width="1" height="4" fill="#000"/><rect x="965" y="214" width="1" height="4" fill="#000"/><rect x="1029" y="214" width="1" height="4" fill="#000"/><rect x="1093" y="214" width="1" height="4" fill="#000"/><rect x="1126" y="97" width="10" height="1" fill="#ff0000"/><rect x="1136.5" y="91.5" width="41" height="12" fill="none" stroke="#ff0000"/><rect x="1126" y="130" width="10" height="1" fill="#00e000"/><rect x="1136.5" y="124.5" width="41" height="12" fill="none" stroke="#00e000"/><rect x="1126" y="154" width="10" height="1" fill="#0000ff"/><rect x="1136.5" y="148.5" width="41" height="12" fill="none" stroke="#0000ff"/><rect x="1126" y="186" width="10" height="1" fill="#0000ff"/><rect x="1136.5" y="180.5" width="41" height="12" fill="none" stroke="#0000ff"/><rect x="1126" y="210" width="10" height="1" fill="#0000ff"/><rect x="1136.5" y="204.5" width="41" height="12" fill="none" stroke="#0000ff"/><rect x="1320" y="196" width="41" height="11" fill="#000"/></svg><svg class="r" style="left:8px;top:81px" width="7" height="4" viewBox="0 0 7 4"><path d="M0 0 H7 L3.5 4 Z" fill="#000"/></svg><div class="t" style="top:77.53px;font-size:10px;color:#000;font-family:'Liberation Sans',sans-serif;left:21px;transform:scaleX(0.94);transform-origin:0 0;">AUDUSDm,H1</div><div class="t" style="top:90.33px;font-size:10px;color:#000;font-family:'Liberation Sans',sans-serif;left:9.5px;white-space:pre;transform:scaleX(0.945);transform-origin:0 0;">AVG Range 495   Today Range 887</div><div class="t" style="top:218.87px;font-size:9.6px;color:#000;font-family:'Liberation Sans',sans-serif;left:5px;transform:scaleX(0.94);transform-origin:0 0;">25 Oct 2021</div><div class="t" style="top:218.87px;font-size:9.6px;color:#000;font-family:'Liberation Sans',sans-serif;left:69px;transform:scaleX(0.94);transform-origin:0 0;">26 Oct 05:00</div><div class="t" style="top:218.87px;font-size:9.6px;color:#000;font-family:'Liberation Sans',sans-serif;left:133px;transform:scaleX(0.94);transform-origin:0 0;">26 Oct 13:00</div><div class="t" style="top:218.87px;font-size:9.6px;color:#000;font-family:'Liberation Sans',sans-serif;left:197px;transform:scaleX(0.94);transform-origin:0 0;">26 Oct 21:00</div><div class="t" style="top:218.87px;font-size:9.6px;color:#000;font-family:'Liberation Sans',sans-serif;left:261px;transform:scaleX(0.94);transform-origin:0 0;">27 Oct 05:00</div><div class="t" style="top:218.87px;font-size:9.6px;color:#000;font-family:'Liberation Sans',sans-serif;left:325px;transform:scaleX(0.94);transform-origin:0 0;">27 Oct 13:00</div><div class="t" style="top:218.87px;font-size:9.6px;color:#000;font-family:'Liberation Sans',sans-serif;left:389px;transform:scaleX(0.94);transform-origin:0 0;">27 Oct 21:00</div><div class="t" style="top:218.87px;font-size:9.6px;color:#000;font-family:'Liberation Sans',sans-serif;left:453px;transform:scaleX(0.94);transform-origin:0 0;">28 Oct 05:00</div><div class="t" style="top:218.87px;font-size:9.6px;color:#000;font-family:'Liberation Sans',sans-serif;left:517px;transform:scaleX(0.94);transform-origin:0 0;">28 Oct 13:00</div><div class="t" style="top:218.87px;font-size:9.6px;color:#000;font-family:'Liberation Sans',sans-serif;left:581px;transform:scaleX(0.94);transform-origin:0 0;">28 Oct 21:00</div><div class="t" style="top:218.87px;font-size:9.6px;color:#000;font-family:'Liberation Sans',sans-serif;left:645px;transform:scaleX(0.94);transform-origin:0 0;">29 Oct 05:00</div><div class="t" style="top:218.87px;font-size:9.6px;color:#000;font-family:'Liberation Sans',sans-serif;left:709px;transform:scaleX(0.94);transform-origin:0 0;">29 Oct 13:00</div><div class="t" style="top:218.87px;font-size:9.6px;color:#000;font-family:'Liberation Sans',sans-serif;left:773px;transform:scaleX(0.94);transform-origin:0 0;">29 Oct 21:00</div><div class="t" style="top:218.87px;font-size:9.6px;color:#000;font-family:'Liberation Sans',sans-serif;left:837px;transform:scaleX(0.94);transform-origin:0 0;">1 Nov 04:00</div><div class="t" style="top:218.87px;font-size:9.6px;color:#000;font-family:'Liberation Sans',sans-serif;left:901px;transform:scaleX(0.94);transform-origin:0 0;">1 Nov 12:00</div><div class="t" style="top:218.87px;font-size:9.6px;color:#000;font-family:'Liberation Sans',sans-serif;left:965px;transform:scaleX(0.94);transform-origin:0 0;">1 Nov 20:00</div><div class="t" style="top:218.87px;font-size:9.6px;color:#000;font-family:'Liberation Sans',sans-serif;left:1029px;transform:scaleX(0.94);transform-origin:0 0;">2 Nov 04:00</div><div class="t" style="top:218.87px;font-size:9.6px;color:#000;font-family:'Liberation Sans',sans-serif;left:1093px;transform:scaleX(0.94);transform-origin:0 0;">2 Nov 12:00</div><div class="t" style="top:74.47px;font-size:9.6px;color:#000;font-family:'Liberation Sans',sans-serif;left:1324px;transform:scaleX(0.94);transform-origin:0 0;">0.75575</div><div class="t" style="top:107.47px;font-size:9.6px;color:#000;font-family:'Liberation Sans',sans-serif;left:1324px;transform:scaleX(0.94);transform-origin:0 0;">0.75285</div><div class="t" style="top:140.47px;font-size:9.6px;color:#000;font-family:'Liberation Sans',sans-serif;left:1324px;transform:scaleX(0.94);transform-origin:0 0;">0.74995</div><div class="t" style="top:173.47px;font-size:9.6px;color:#000;font-family:'Liberation Sans',sans-serif;left:1324px;transform:scaleX(0.94);transform-origin:0 0;">0.74700</div><div class="t" style="top:206.47px;font-size:9.6px;color:#000;font-family:'Liberation Sans',sans-serif;left:1324px;transform:scaleX(0.94);transform-origin:0 0;">0.74410</div><div class="t" style="top:196.87px;font-size:9.6px;color:#fff;font-family:'Liberation Sans',sans-serif;left:1324px;transform:scaleX(0.94);transform-origin:0 0;">0.74497</div><div class="t" style="top:92.69px;font-size:11px;color:#ff0000;font-family:'Liberation Sans',sans-serif;left:1135.0px;width:10px;text-align:center;transform:scaleX(0.8);">0</div><div class="t" style="top:92.69px;font-size:11px;color:#ff0000;font-family:'Liberation Sans',sans-serif;left:1140.62px;width:10px;text-align:center;transform:scaleX(0.8);">.</div><div class="t" style="top:92.69px;font-size:11px;color:#ff0000;font-family:'Liberation Sans',sans-serif;left:1146.24px;width:10px;text-align:center;transform:scaleX(0.8);">7</div><div class="t" style="top:92.69px;font-size:11px;color:#ff0000;font-family:'Liberation Sans',sans-serif;left:1151.86px;width:10px;text-align:center;transform:scaleX(0.8);">5</div><div class="t" style="top:92.69px;font-size:11px;color:#ff0000;font-family:'Liberation Sans',sans-serif;left:1157.48px;width:10px;text-align:center;transform:scaleX(0.8);">4</div><div class="t" style="top:92.69px;font-size:11px;color:#ff0000;font-family:'Liberation Sans',sans-serif;left:1163.1px;width:10px;text-align:center;transform:scaleX(0.8);">1</div><div class="t" style="top:92.69px;font-size:11px;color:#ff0000;font-family:'Liberation Sans',sans-serif;left:1168.72px;width:10px;text-align:center;transform:scaleX(0.8);">7</div><div class="t" style="top:125.19px;font-size:11px;color:#00d000;font-family:'Liberation Sans',sans-serif;left:1135.0px;width:10px;text-align:center;transform:scaleX(0.8);">0</div><div class="t" style="top:125.19px;font-size:11px;color:#00d000;font-family:'Liberation Sans',sans-serif;left:1140.62px;width:10px;text-align:center;transform:scaleX(0.8);">.</div><div class="t" style="top:125.19px;font-size:11px;color:#00d000;font-family:'Liberation Sans',sans-serif;left:1146.24px;width:10px;text-align:center;transform:scaleX(0.8);">7</div><div class="t" style="top:125.19px;font-size:11px;color:#00d000;font-family:'Liberation Sans',sans-serif;left:1151.86px;width:10px;text-align:center;transform:scaleX(0.8);">5</div><div class="t" style="top:125.19px;font-size:11px;color:#00d000;font-family:'Liberation Sans',sans-serif;left:1157.48px;width:10px;text-align:center;transform:scaleX(0.8);">1</div><div class="t" style="top:125.19px;font-size:11px;color:#00d000;font-family:'Liberation Sans',sans-serif;left:1163.1px;width:10px;text-align:center;transform:scaleX(0.8);">3</div><div class="t" style="top:125.19px;font-size:11px;color:#00d000;font-family:'Liberation Sans',sans-serif;left:1168.72px;width:10px;text-align:center;transform:scaleX(0.8);">7</div><div class="t" style="top:150.19px;font-size:11px;color:#0000ff;font-family:'Liberation Sans',sans-serif;left:1135.0px;width:10px;text-align:center;transform:scaleX(0.8);">0</div><div class="t" style="top:150.19px;font-size:11px;color:#0000ff;font-family:'Liberation Sans',sans-serif;left:1140.62px;width:10px;text-align:center;transform:scaleX(0.8);">.</div><div class="t" style="top:150.19px;font-size:11px;color:#0000ff;font-family:'Liberation Sans',sans-serif;left:1146.24px;width:10px;text-align:center;transform:scaleX(0.8);">7</div><div class="t" style="top:150.19px;font-size:11px;color:#0000ff;font-family:'Liberation Sans',sans-serif;left:1151.86px;width:10px;text-align:center;transform:scaleX(0.8);">4</div><div class="t" style="top:150.19px;font-size:11px;color:#0000ff;font-family:'Liberation Sans',sans-serif;left:1157.48px;width:10px;text-align:center;transform:scaleX(0.8);">9</div><div class="t" style="top:150.19px;font-size:11px;color:#0000ff;font-family:'Liberation Sans',sans-serif;left:1163.1px;width:10px;text-align:center;transform:scaleX(0.8);">1</div><div class="t" style="top:150.19px;font-size:11px;color:#0000ff;font-family:'Liberation Sans',sans-serif;left:1168.72px;width:10px;text-align:center;transform:scaleX(0.8);">8</div><div class="t" style="top:181.19px;font-size:11px;color:#0000ff;font-family:'Liberation Sans',sans-serif;left:1135.0px;width:10px;text-align:center;transform:scaleX(0.8);">0</div><div class="t" style="top:181.19px;font-size:11px;color:#0000ff;font-family:'Liberation Sans',sans-serif;left:1140.62px;width:10px;text-align:center;transform:scaleX(0.8);">.</div><div class="t" style="top:181.19px;font-size:11px;color:#0000ff;font-family:'Liberation Sans',sans-serif;left:1146.24px;width:10px;text-align:center;transform:scaleX(0.8);">7</div><div class="t" style="top:181.19px;font-size:11px;color:#0000ff;font-family:'Liberation Sans',sans-serif;left:1151.86px;width:10px;text-align:center;transform:scaleX(0.8);">4</div><div class="t" style="top:181.19px;font-size:11px;color:#0000ff;font-family:'Liberation Sans',sans-serif;left:1157.48px;width:10px;text-align:center;transform:scaleX(0.8);">6</div><div class="t" style="top:181.19px;font-size:11px;color:#0000ff;font-family:'Liberation Sans',sans-serif;left:1163.1px;width:10px;text-align:center;transform:scaleX(0.8);">3</div><div class="t" style="top:181.19px;font-size:11px;color:#0000ff;font-family:'Liberation Sans',sans-serif;left:1168.72px;width:10px;text-align:center;transform:scaleX(0.8);">8</div><div class="t" style="top:206.19px;font-size:11px;color:#0000ff;font-family:'Liberation Sans',sans-serif;left:1135.0px;width:10px;text-align:center;transform:scaleX(0.8);">0</div><div class="t" style="top:206.19px;font-size:11px;color:#0000ff;font-family:'Liberation Sans',sans-serif;left:1140.62px;width:10px;text-align:center;transform:scaleX(0.8);">.</div><div class="t" style="top:206.19px;font-size:11px;color:#0000ff;font-family:'Liberation Sans',sans-serif;left:1146.24px;width:10px;text-align:center;transform:scaleX(0.8);">7</div><div class="t" style="top:206.19px;font-size:11px;color:#0000ff;font-family:'Liberation Sans',sans-serif;left:1151.86px;width:10px;text-align:center;transform:scaleX(0.8);">4</div><div class="t" style="top:206.19px;font-size:11px;color:#0000ff;font-family:'Liberation Sans',sans-serif;left:1157.48px;width:10px;text-align:center;transform:scaleX(0.8);">4</div><div class="t" style="top:206.19px;font-size:11px;color:#0000ff;font-family:'Liberation Sans',sans-serif;left:1163.1px;width:10px;text-align:center;transform:scaleX(0.8);">1</div><div class="t" style="top:206.19px;font-size:11px;color:#0000ff;font-family:'Liberation Sans',sans-serif;left:1168.72px;width:10px;text-align:center;transform:scaleX(0.8);">9</div><div class="t" style="top:188.50px;font-size:13px;color:#000;font-family:'Liberation Sans',sans-serif;left:11.5px;font-weight:bold;transform:scaleX(0.70);transform-origin:0 0;text-shadow:0 -1px 0 #000,0.7px 0 0 #000;">#27891666 sell 0.01</div><div class="t" style="top:79.30px;font-size:9.1px;color:#111;font-family:'Liberation Sans',sans-serif;left:1132.4px;">GridPallada_Jalal-EA (expire 2021.12.31)</div><div class="t" style="top:78.38px;font-size:9px;color:#8a8aa0;font-family:'Liberation Sans',sans-serif;left:1302px;">PA</div><svg class="r" style="left:1302px;top:79px" width="14" height="14" viewBox="0 0 14 14"><circle cx="7" cy="7" r="5.5" fill="none" stroke="#777" stroke-width="1.2"/><path d="M4 8 q3 3 6 0" stroke="#777" fill="none"/></svg><div class="t" style="top:92.91px;font-size:10.5px;color:#7a7a96;font-family:'Liberation Sans',sans-serif;left:887px;width:400px;text-align:right;">1M:</div><div class="t" style="top:112.71px;font-size:10.5px;color:#7a7a96;font-family:'Liberation Sans',sans-serif;left:887px;width:400px;text-align:right;">5M:</div><div class="t" style="top:132.61px;font-size:10.5px;color:#7a7a96;font-family:'Liberation Sans',sans-serif;left:887px;width:400px;text-align:right;">15M:</div><div class="t" style="top:153.11px;font-size:10.5px;color:#7a7a96;font-family:'Liberation Sans',sans-serif;left:887px;width:400px;text-align:right;">30M:</div><div class="t" style="top:172.81px;font-size:10.5px;color:#7a7a96;font-family:'Liberation Sans',sans-serif;left:887px;width:400px;text-align:right;">1H:</div><div class="t" style="top:192.61px;font-size:10.5px;color:#7a7a96;font-family:'Liberation Sans',sans-serif;left:887px;width:400px;text-align:right;">4H:</div><div class="t" style="top:86.23px;font-size:10.6px;color:#3d3a2a;font-family:'Liberation Sans',sans-serif;left:913px;width:400px;text-align:right;">Lt Signals</div><div class="t" style="top:106.60px;font-size:10.4px;color:#ff0000;font-family:'Liberation Sans',sans-serif;left:913px;width:400px;text-align:right;">Direction: DN</div><div class="t" style="top:126.27px;font-size:10.9px;color:#3d3a2a;font-family:'Liberation Sans',sans-serif;left:913px;width:400px;text-align:right;">1. Target - 0.74319</div><div class="t" style="top:136.67px;font-size:10.9px;color:#3d3a2a;font-family:'Liberation Sans',sans-serif;left:913px;width:400px;text-align:right;">2. Target - 0.74078</div><div class="t" style="top:146.57px;font-size:10.9px;color:#3d3a2a;font-family:'Liberation Sans',sans-serif;left:913px;width:400px;text-align:right;">3. Target - 0.73702</div><div class="t" style="top:166.93px;font-size:10.6px;color:#3d3a2a;font-family:'Liberation Sans',sans-serif;left:913px;width:400px;text-align:right;">Range: 617</div><div class="t" style="top:186.63px;font-size:10.6px;color:#3d3a2a;font-family:'Liberation Sans',sans-serif;left:913px;width:400px;text-align:right;">Lt Signals</div><svg class="r" style="left:0;top:0" width="1366" height="240"><path d="M1304.9 93 h5 v4 l3.5 -2 v3.5 l-6 5 l-6 -5 v-3.5 l3.5 2 z" fill="#ff0000"/><path d="M1304.9 112.8 h5 v4 l3.5 -2 v3.5 l-6 5 l-6 -5 v-3.5 l3.5 2 z" fill="#ff0000"/><path d="M1304.9 133 h5 v4 l3.5 -2 v3.5 l-6 5 l-6 -5 v-3.5 l3.5 2 z" fill="#ff0000"/><path d="M1304.9 152.4 h5 v4 l3.5 -2 v3.5 l-6 5 l-6 -5 v-3.5 l3.5 2 z" fill="#ff0000"/><path d="M1304.9 173.7 h5 v4 l3.5 -2 v3.5 l-6 5 l-6 -5 v-3.5 l3.5 2 z" fill="#ff0000"/><path d="M1304.9 194 h5 v4 l3.5 -2 v3.5 l-6 5 l-6 -5 v-3.5 l3.5 2 z" fill="#ff0000"/></svg><div class="r" style="left:0px;top:235px;width:1366px;height:23px;background:#f0f0f0;"></div><div class="r" style="left:0px;top:235px;width:2px;height:22px;background:#8c8c8c;"></div><div class="r" style="left:2px;top:237px;width:1364px;height:1px;background:#1a1a1a;"></div><div class="r" style="left:102px;top:237px;width:96px;height:19px;background:#fff;border:1px solid #1a1a1a;border-top:none;box-sizing:border-box;border-bottom-width:2px;"></div><div class="t" style="top:241.45px;font-size:10.69px;color:#6d6d6d;font-family:'Liberation Sans',sans-serif;left:18.3px;white-space:nowrap;">EURUSDm,H1</div><div class="t" style="top:240.77px;font-size:11.49px;color:#000;font-family:'Liberation Sans',sans-serif;left:112px;white-space:nowrap;">AUDUSDm,H1</div><div class="t" style="top:241.22px;font-size:10.96px;color:#6d6d6d;font-family:'Liberation Sans',sans-serif;left:209px;white-space:nowrap;">GBPUSDm,H1</div><div class="t" style="top:240.99px;font-size:11.24px;color:#6d6d6d;font-family:'Liberation Sans',sans-serif;left:304.2px;white-space:nowrap;">USDCADm,H1</div><div class="t" style="top:241.04px;font-size:11.17px;color:#6d6d6d;font-family:'Liberation Sans',sans-serif;left:401.6px;white-space:nowrap;">USDCHFm,H1</div><div class="t" style="top:241.30px;font-size:10.87px;color:#6d6d6d;font-family:'Liberation Sans',sans-serif;left:498.2px;white-space:nowrap;">USDJPYm,M15</div><div class="t" style="top:240.86px;font-size:11.39px;color:#6d6d6d;font-family:'Liberation Sans',sans-serif;left:596.3px;white-space:nowrap;">NZDUSDm,M15</div><div class="t" style="top:241.01px;font-size:11.21px;color:#6d6d6d;font-family:'Liberation Sans',sans-serif;left:701px;white-space:nowrap;">EURCHFm,M15</div><div class="t" style="top:241.15px;font-size:11.05px;color:#6d6d6d;font-family:'Liberation Sans',sans-serif;left:805.6px;white-space:nowrap;">EURGBPm,M15</div><div class="t" style="top:241.43px;font-size:10.71px;color:#6d6d6d;font-family:'Liberation Sans',sans-serif;left:910px;white-space:nowrap;">EURJPYm,M15</div><div class="t" style="top:241.18px;font-size:11.01px;color:#6d6d6d;font-family:'Liberation Sans',sans-serif;left:1009px;white-space:nowrap;">EURAUDm,H1</div><div class="t" style="top:241.02px;font-size:11.2px;color:#6d6d6d;font-family:'Liberation Sans',sans-serif;left:1105.4px;white-space:nowrap;">EURNZDm,M15</div><div class="t" style="top:241.08px;font-size:11.13px;color:#6d6d6d;font-family:'Liberation Sans',sans-serif;left:1210px;white-space:nowrap;">EURCADm,M15</div><div class="t" style="top:241.19px;font-size:11px;color:#6d6d6d;font-family:'Liberation Sans',sans-serif;left:1313.8px;white-space:nowrap;">GB</div><div class="r" style="left:294px;top:242px;width:1px;height:12px;background:#6d6d6d;"></div><div class="r" style="left:391px;top:242px;width:1px;height:12px;background:#6d6d6d;"></div><div class="r" style="left:486px;top:242px;width:1px;height:12px;background:#6d6d6d;"></div><div class="r" style="left:586px;top:242px;width:1px;height:12px;background:#6d6d6d;"></div><div class="r" style="left:690px;top:242px;width:1px;height:12px;background:#6d6d6d;"></div><div class="r" style="left:794px;top:242px;width:1px;height:12px;background:#6d6d6d;"></div><div class="r" style="left:898px;top:242px;width:1px;height:12px;background:#6d6d6d;"></div><div class="r" style="left:998px;top:242px;width:1px;height:12px;background:#6d6d6d;"></div><div class="r" style="left:1094px;top:242px;width:1px;height:12px;background:#6d6d6d;"></div><div class="r" style="left:1198px;top:242px;width:1px;height:12px;background:#6d6d6d;"></div><div class="r" style="left:1303px;top:242px;width:1px;height:12px;background:#6d6d6d;"></div><svg class="r" style="left:1332px;top:243px" width="30" height="10" viewBox="0 0 30 10"><path d="M6 0 L2 3 L6 6 Z" fill="#a0a0a0"/><path d="M21 0 L24.5 3 L21 6 Z" fill="#000"/></svg><div class="r" style="left:0px;top:258px;width:1366px;height:446px;background:#f0f0f0;"></div><div class="r" style="left:1px;top:275px;width:13px;height:427px;background:#c9d9ea;"></div><div class="t" style="left:2px;top:700px;width:60px;height:12px;font-size:11.6px;font-family:'Liberation Sans',sans-serif;color:#000;transform:rotate(-90deg);transform-origin:0 0;line-height:12px;">Terminal</div><svg class="r" style="left:4px;top:263.5px" width="7" height="7" viewBox="0 0 7 7"><path d="M0.8 0.8 L6 6 M6 0.8 L0.8 6" stroke="#000" stroke-width="1.5"/></svg><div class="r" style="left:15px;top:261px;width:1348px;height:419px;background:#fff;border-top:1px solid #a0a0a0;border-left:1px solid #a0a0a0;box-sizing:border-box;"></div><div class="r" style="left:16px;top:286px;width:1329px;height:20px;background:#0078d7;"></div><div class="r" style="left:640px;top:287px;width:79px;height:19px;background:#64ee64;"></div><div class="r" style="left:16px;top:306px;width:1329px;height:20px;background:#ebebeb;"></div><div class="r" style="left:16px;top:306px;width:1329px;height:1px;background:#d2d2d2;"></div><div class="r" style="left:640px;top:307px;width:79px;height:19px;background:#64ee64;"></div><div class="r" style="left:16px;top:326px;width:1329px;height:20px;background:#fff;"></div><div class="r" style="left:16px;top:326px;width:1329px;height:1px;background:#d2d2d2;"></div><div class="r" style="left:640px;top:327px;width:79px;height:19px;background:#64ee64;"></div><div class="r" style="left:16px;top:346px;width:1329px;height:20px;background:#ebebeb;"></div><div class="r" style="left:16px;top:346px;width:1329px;height:1px;background:#d2d2d2;"></div><div class="r" style="left:640px;top:347px;width:79px;height:19px;background:#64ee64;"></div><div class="r" style="left:16px;top:366px;width:1329px;height:20px;background:#fff;"></div><div class="r" style="left:16px;top:366px;width:1329px;height:1px;background:#d2d2d2;"></div><div class="r" style="left:640px;top:367px;width:79px;height:19px;background:#64ee64;"></div><div class="r" style="left:16px;top:386px;width:1329px;height:20px;background:#ebebeb;"></div><div class="r" style="left:16px;top:386px;width:1329px;height:1px;background:#d2d2d2;"></div><div class="r" style="left:640px;top:387px;width:79px;height:19px;background:#64ee64;"></div><div class="r" style="left:16px;top:406px;width:1329px;height:20px;background:#fff;"></div><div class="r" style="left:16px;top:406px;width:1329px;height:1px;background:#d2d2d2;"></div><div class="r" style="left:640px;top:407px;width:79px;height:19px;background:#64ee64;"></div><div class="r" style="left:16px;top:426px;width:1329px;height:20px;background:#ebebeb;"></div><div class="r" style="left:16px;top:426px;width:1329px;height:1px;background:#d2d2d2;"></div><div class="r" style="left:640px;top:427px;width:79px;height:19px;background:#64ee64;"></div><div class="r" style="left:16px;top:446px;width:1329px;height:20px;background:#fff;"></div><div class="r" style="left:16px;top:446px;width:1329px;height:1px;background:#d2d2d2;"></div><div class="r" style="left:640px;top:447px;width:79px;height:19px;background:#64ee64;"></div><div class="r" style="left:16px;top:466px;width:1329px;height:20px;background:#ebebeb;"></div><div class="r" style="left:16px;top:466px;width:1329px;height:1px;background:#d2d2d2;"></div><div class="r" style="left:640px;top:467px;width:79px;height:19px;background:#64ee64;"></div><div class="r" style="left:16px;top:486px;width:1329px;height:20px;background:#fff;"></div><div class="r" style="left:16px;top:486px;width:1329px;height:1px;background:#d2d2d2;"></div><div class="r" style="left:640px;top:487px;width:79px;height:19px;background:#64ee64;"></div><div class="r" style="left:16px;top:506px;width:1329px;height:20px;background:#ebebeb;"></div><div class="r" style="left:16px;top:506px;width:1329px;height:1px;background:#d2d2d2;"></div><div class="r" style="left:640px;top:507px;width:79px;height:19px;background:#64ee64;"></div><div class="r" style="left:16px;top:526px;width:1329px;height:20px;background:#fff;"></div><div class="r" style="left:16px;top:526px;width:1329px;height:1px;background:#d2d2d2;"></div><div class="r" style="left:640px;top:527px;width:79px;height:19px;background:#64ee64;"></div><div class="r" style="left:16px;top:546px;width:1329px;height:20px;background:#ebebeb;"></div><div class="r" style="left:16px;top:546px;width:1329px;height:1px;background:#d2d2d2;"></div><div class="r" style="left:640px;top:547px;width:79px;height:19px;background:#64ee64;"></div><div class="r" style="left:16px;top:566px;width:1329px;height:20px;background:#fff;"></div><div class="r" style="left:16px;top:566px;width:1329px;height:1px;background:#d2d2d2;"></div><div class="r" style="left:640px;top:567px;width:79px;height:19px;background:#64ee64;"></div><div class="r" style="left:16px;top:586px;width:1329px;height:20px;background:#ebebeb;"></div><div class="r" style="left:16px;top:586px;width:1329px;height:1px;background:#d2d2d2;"></div><div class="r" style="left:640px;top:587px;width:79px;height:19px;background:#64ee64;"></div><div class="r" style="left:16px;top:606px;width:1329px;height:20px;background:#fff;"></div><div class="r" style="left:16px;top:606px;width:1329px;height:1px;background:#d2d2d2;"></div><div class="r" style="left:640px;top:607px;width:79px;height:19px;background:#64ee64;"></div><div class="r" style="left:16px;top:626px;width:1329px;height:20px;background:#ebebeb;"></div><div class="r" style="left:16px;top:626px;width:1329px;height:1px;background:#d2d2d2;"></div><div class="r" style="left:640px;top:627px;width:79px;height:19px;background:#64ee64;"></div><div class="r" style="left:16px;top:646px;width:1329px;height:20px;background:#fff;"></div><div class="r" style="left:16px;top:646px;width:1329px;height:1px;background:#d2d2d2;"></div><div class="r" style="left:640px;top:647px;width:79px;height:19px;background:#64ee64;"></div><div class="r" style="left:16px;top:666px;width:1329px;height:14px;background:#ebebeb;"></div><div class="r" style="left:16px;top:666px;width:1329px;height:1px;background:#d2d2d2;"></div><div class="r" style="left:640px;top:667px;width:79px;height:13px;background:#64ee64;"></div><div class="r" style="left:121px;top:286px;width:1px;height:394px;background:#d2d2d2;"></div><div class="r" style="left:269px;top:286px;width:1px;height:394px;background:#d2d2d2;"></div><div class="r" style="left:343px;top:286px;width:1px;height:394px;background:#d2d2d2;"></div><div class="r" style="left:400px;top:286px;width:1px;height:394px;background:#d2d2d2;"></div><div class="r" style="left:474px;top:286px;width:1px;height:394px;background:#d2d2d2;"></div><div class="r" style="left:556px;top:286px;width:1px;height:394px;background:#d2d2d2;"></div><div class="r" style="left:638px;top:286px;width:1px;height:394px;background:#d2d2d2;"></div><div class="r" style="left:720px;top:286px;width:1px;height:394px;background:#d2d2d2;"></div><div class="r" style="left:802px;top:286px;width:1px;height:394px;background:#d2d2d2;"></div><div class="r" style="left:884px;top:286px;width:1px;height:394px;background:#d2d2d2;"></div><div class="r" style="left:966px;top:286px;width:1px;height:394px;background:#d2d2d2;"></div><div class="r" style="left:1088px;top:286px;width:1px;height:394px;background:#d2d2d2;"></div><div class="r" style="left:122px;top:262px;width:1px;height:24px;background:#e5e5e5;"></div><div class="r" style="left:270px;top:262px;width:1px;height:24px;background:#e5e5e5;"></div><div class="r" style="left:344px;top:262px;width:1px;height:24px;background:#e5e5e5;"></div><div class="r" style="left:401px;top:262px;width:1px;height:24px;background:#e5e5e5;"></div><div class="r" style="left:475px;top:262px;width:1px;height:24px;background:#e5e5e5;"></div><div class="r" style="left:557px;top:262px;width:1px;height:24px;background:#e5e5e5;"></div><div class="r" style="left:639px;top:262px;width:1px;height:24px;background:#e5e5e5;"></div><div class="r" style="left:721px;top:262px;width:1px;height:24px;background:#e5e5e5;"></div><div class="r" style="left:803px;top:262px;width:1px;height:24px;background:#e5e5e5;"></div><div class="r" style="left:885px;top:262px;width:1px;height:24px;background:#e5e5e5;"></div><div class="r" style="left:967px;top:262px;width:1px;height:24px;background:#e5e5e5;"></div><div class="r" style="left:1089px;top:262px;width:1px;height:24px;background:#e5e5e5;"></div><div class="t" style="top:267.76px;font-size:12.1px;color:#000;font-family:'Liberation Sans',sans-serif;left:22.4px;white-space:pre;">Order</div><div class="t" style="top:267.76px;font-size:12.1px;color:#000;font-family:'Liberation Sans',sans-serif;left:-135px;width:400px;text-align:right;white-space:pre;">Time</div><div class="t" style="top:267.76px;font-size:12.1px;color:#000;font-family:'Liberation Sans',sans-serif;left:-61px;width:400px;text-align:right;white-space:pre;">Type</div><div class="t" style="top:267.76px;font-size:12.1px;color:#000;font-family:'Liberation Sans',sans-serif;left:-4px;width:400px;text-align:right;white-space:pre;">Size</div><div class="t" style="top:267.76px;font-size:12.1px;color:#000;font-family:'Liberation Sans',sans-serif;left:410px;white-space:pre;">Symbol</div><div class="t" style="top:267.76px;font-size:12.1px;color:#000;font-family:'Liberation Sans',sans-serif;left:152px;width:400px;text-align:right;white-space:pre;">Price</div><div class="t" style="top:267.76px;font-size:12.1px;color:#000;font-family:'Liberation Sans',sans-serif;left:234px;width:400px;text-align:right;white-space:pre;">S / L</div><div class="t" style="top:267.76px;font-size:12.1px;color:#000;font-family:'Liberation Sans',sans-serif;left:316px;width:400px;text-align:right;white-space:pre;">T / P</div><div class="t" style="top:267.76px;font-size:12.1px;color:#000;font-family:'Liberation Sans',sans-serif;left:398px;width:400px;text-align:right;white-space:pre;">Price</div><div class="t" style="top:267.76px;font-size:12.1px;color:#000;font-family:'Liberation Sans',sans-serif;left:813px;white-space:pre;">Commission</div><div class="t" style="top:267.76px;font-size:12.1px;color:#000;font-family:'Liberation Sans',sans-serif;left:562px;width:400px;text-align:right;white-space:pre;">Swap</div><div class="t" style="top:267.76px;font-size:12.1px;color:#000;font-family:'Liberation Sans',sans-serif;left:684px;width:400px;text-align:right;white-space:pre;">Profit</div><div class="t" style="top:267.76px;font-size:12.1px;color:#000;font-family:'Liberation Sans',sans-serif;left:938.5999999999999px;width:400px;text-align:right;white-space:pre;">Comment</div><svg class="r" style="left:461px;top:270px" width="5" height="7" viewBox="0 0 5 7"><path d="M1 6 L4 1" stroke="#777" stroke-width="1"/></svg><svg class="r" style="left:19px;top:289px" width="15" height="15" viewBox="0 0 15 15"><path d="M0.5 0.5 h7 l3 3 v10 h-10 z" fill="#fbfbfb" stroke="#6a6a6a"/><path d="M7.5 0.5 v3 h3" fill="none" stroke="#6a6a6a"/><circle cx="10.5" cy="11" r="3.6" fill="#e8400f" stroke="#fff" stroke-width="0.6"/></svg><div class="t" style="top:290.69px;font-size:11px;color:#fff;font-family:'Liberation Sans',sans-serif;left:38.5px;white-space:pre;">27891666</div><div class="t" style="top:290.69px;font-size:11px;color:#fff;font-family:'Liberation Sans',sans-serif;left:-133px;width:400px;text-align:right;white-space:pre;">2021.11.02 14:39:13</div><div class="t" style="top:290.10px;font-size:11.7px;color:#fff;font-family:'Liberation Sans',sans-serif;left:-59px;width:400px;text-align:right;white-space:pre;">sell</div><div class="t" style="top:290.69px;font-size:11px;color:#fff;font-family:'Liberation Sans',sans-serif;left:-2px;width:400px;text-align:right;white-space:pre;">0.01</div><div class="t" style="top:290.10px;font-size:11.7px;color:#fff;font-family:'Liberation Sans',sans-serif;left:72px;width:400px;text-align:right;white-space:pre;">audusdm</div><div class="t" style="top:290.69px;font-size:11px;color:#fff;font-family:'Liberation Sans',sans-serif;left:154px;width:400px;text-align:right;white-space:pre;">0.74501</div><div class="t" style="top:290.69px;font-size:11px;color:#fff;font-family:'Liberation Sans',sans-serif;left:236px;width:400px;text-align:right;white-space:pre;">0.00000</div><div class="t" style="top:290.69px;font-size:11px;color:#000;font-family:'Liberation Sans',sans-serif;left:317px;width:400px;text-align:right;white-space:pre;">0.74490</div><div class="t" style="top:290.69px;font-size:11px;color:#fff;font-family:'Liberation Sans',sans-serif;left:400px;width:400px;text-align:right;white-space:pre;">0.74506</div><div class="t" style="top:290.69px;font-size:11px;color:#fff;font-family:'Liberation Sans',sans-serif;left:482px;width:400px;text-align:right;white-space:pre;">0.00</div><div class="t" style="top:290.69px;font-size:11px;color:#fff;font-family:'Liberation Sans',sans-serif;left:564px;width:400px;text-align:right;white-space:pre;">0.00</div><div class="t" style="top:290.69px;font-size:11px;color:#fff;font-family:'Liberation Sans',sans-serif;left:668px;width:400px;text-align:right;white-space:pre;">-0.05</div><div class="t" style="top:290.10px;font-size:11.7px;color:#fff;font-family:'Liberation Sans',sans-serif;left:941px;width:400px;text-align:right;white-space:pre;">Kira-h3</div><svg class="r" style="left:1076px;top:292px" width="9" height="9" viewBox="0 0 9 9"><path d="M1 1 L8 8 M8 1 L1 8" stroke="#9a9a9a" stroke-width="1.7"/></svg><svg class="r" style="left:19px;top:309px" width="15" height="15" viewBox="0 0 15 15"><path d="M0.5 0.5 h7 l3 3 v10 h-10 z" fill="#fbfbfb" stroke="#6a6a6a"/><path d="M7.5 0.5 v3 h3" fill="none" stroke="#6a6a6a"/><circle cx="10.5" cy="11" r="3.6" fill="#e8400f" stroke="#fff" stroke-width="0.6"/></svg><div class="t" style="top:310.69px;font-size:11px;color:#000;font-family:'Liberation Sans',sans-serif;left:38.5px;white-space:pre;">27891668</div><div class="t" style="top:310.69px;font-size:11px;color:#000;font-family:'Liberation Sans',sans-serif;left:-133px;width:400px;text-align:right;white-space:pre;">2021.11.02 14:39:13</div><div class="t" style="top:310.10px;font-size:11.7px;color:#000;font-family:'Liberation Sans',sans-serif;left:-59px;width:400px;text-align:right;white-space:pre;">sell</div><div class="t" style="top:310.69px;font-size:11px;color:#000;font-family:'Liberation Sans',sans-serif;left:-2px;width:400px;text-align:right;white-space:pre;">0.01</div><div class="t" style="top:310.10px;font-size:11.7px;color:#000;font-family:'Liberation Sans',sans-serif;left:72px;width:400px;text-align:right;white-space:pre;">audusdm</div><div class="t" style="top:310.69px;font-size:11px;color:#000;font-family:'Liberation Sans',sans-serif;left:154px;width:400px;text-align:right;white-space:pre;">0.74501</div><div class="t" style="top:310.69px;font-size:11px;color:#000;font-family:'Liberation Sans',sans-serif;left:236px;width:400px;text-align:right;white-space:pre;">0.00000</div><div class="t" style="top:310.69px;font-size:11px;color:#000;font-family:'Liberation Sans',sans-serif;left:317px;width:400px;text-align:right;white-space:pre;">0.74490</div><div class="t" style="top:310.69px;font-size:11px;color:#000;font-family:'Liberation Sans',sans-serif;left:400px;width:400px;text-align:right;white-space:pre;">0.74506</div><div class="t" style="top:310.69px;font-size:11px;color:#000;font-family:'Liberation Sans',sans-serif;left:482px;width:400px;text-align:right;white-space:pre;">0.00</div><div class="t" style="top:310.69px;font-size:11px;color:#000;font-family:'Liberation Sans',sans-serif;left:564px;width:400px;text-align:right;white-space:pre;">0.00</div><div class="t" style="top:310.69px;font-size:11px;color:#000;font-family:'Liberation Sans',sans-serif;left:668px;width:400px;text-align:right;white-space:pre;">-0.05</div><div class="t" style="top:310.10px;font-size:11.7px;color:#000;font-family:'Liberation Sans',sans-serif;left:941px;width:400px;text-align:right;white-space:pre;">Kira-h</div><svg class="r" style="left:1076px;top:312px" width="9" height="9" viewBox="0 0 9 9"><path d="M1 1 L8 8 M8 1 L1 8" stroke="#9a9a9a" stroke-width="1.7"/></svg><svg class="r" style="left:19px;top:329px" width="15" height="15" viewBox="0 0 15 15"><path d="M0.5 0.5 h7 l3 3 v10 h-10 z" fill="#fbfbfb" stroke="#6a6a6a"/><path d="M7.5 0.5 v3 h3" fill="none" stroke="#6a6a6a"/><circle cx="10.5" cy="11" r="3.6" fill="#e8400f" stroke="#fff" stroke-width="0.6"/></svg><div class="t" style="top:330.69px;font-size:11px;color:#000;font-family:'Liberation Sans',sans-serif;left:38.5px;white-space:pre;">27891670</div><div class="t" style="top:330.69px;font-size:11px;color:#000;font-family:'Liberation Sans',sans-serif;left:-133px;width:400px;text-align:right;white-space:pre;">2021.11.02 14:39:14</div><div class="t" style="top:330.10px;font-size:11.7px;color:#000;font-family:'Liberation Sans',sans-serif;left:-59px;width:400px;text-align:right;white-space:pre;">sell</div><div class="t" style="top:330.69px;font-size:11px;color:#000;font-family:'Liberation Sans',sans-serif;left:-2px;width:400px;text-align:right;white-space:pre;">0.01</div><div class="t" style="top:330.10px;font-size:11.7px;color:#000;font-family:'Liberation Sans',sans-serif;left:72px;width:400px;text-align:right;white-space:pre;">audusdm</div><div class="t" style="top:330.69px;font-size:11px;color:#000;font-family:'Liberation Sans',sans-serif;left:154px;width:400px;text-align:right;white-space:pre;">0.74502</div><div class="t" style="top:330.69px;font-size:11px;color:#000;font-family:'Liberation Sans',sans-serif;left:236px;width:400px;text-align:right;white-space:pre;">0.00000</div><div class="t" style="top:330.69px;font-size:11px;color:#000;font-family:'Liberation Sans',sans-serif;left:317px;width:400px;text-align:right;white-space:pre;">0.74490</div><div class="t" style="top:330.69px;font-size:11px;color:#000;font-family:'Liberation Sans',sans-serif;left:400px;width:400px;text-align:right;white-space:pre;">0.74506</div><div class="t" style="top:330.69px;font-size:11px;color:#000;font-family:'Liberation Sans',sans-serif;left:482px;width:400px;text-align:right;white-space:pre;">0.00</div><div class="t" style="top:330.69px;font-size:11px;color:#000;font-family:'Liberation Sans',sans-serif;left:564px;width:400px;text-align:right;white-space:pre;">0.00</div><div class="t" style="top:330.69px;font-size:11px;color:#000;font-family:'Liberation Sans',sans-serif;left:668px;width:400px;text-align:right;white-space:pre;">-0.04</div><div class="t" style="top:330.10px;font-size:11.7px;color:#000;font-family:'Liberation Sans',sans-serif;left:941px;width:400px;text-align:right;white-space:pre;">Kira-h</div><svg class="r" style="left:1076px;top:332px" width="9" height="9" viewBox="0 0 9 9"><path d="M1 1 L8 8 M8 1 L1 8" stroke="#9a9a9a" stroke-width="1.7"/></svg><svg class="r" style="left:19px;top:349px" width="15" height="15" viewBox="0 0 15 15"><path d="M0.5 0.5 h7 l3 3 v10 h-10 z" fill="#fbfbfb" stroke="#6a6a6a"/><path d="M7.5 0.5 v3 h3" fill="none" stroke="#6a6a6a"/><circle cx="10.5" cy="11" r="3.6" fill="#e8400f" stroke="#fff" stroke-width="0.6"/></svg><div class="t" style="top:350.69px;font-size:11px;color:#000;font-family:'Liberation Sans',sans-serif;left:38.5px;white-space:pre;">27891672</div><div class="t" style="top:350.69px;font-size:11px;color:#000;font-family:'Liberation Sans',sans-serif;left:-133px;width:400px;text-align:right;white-space:pre;">2021.11.02 14:39:14</div><div class="t" style="top:350.10px;font-size:11.7px;color:#000;font-family:'Liberation Sans',sans-serif;left:-59px;width:400px;text-align:right;white-space:pre;">sell</div><div class="t" style="top:350.69px;font-size:11px;color:#000;font-family:'Liberation Sans',sans-serif;left:-2px;width:400px;text-align:right;white-space:pre;">0.01</div><div class="t" style="top:350.10px;font-size:11.7px;color:#000;font-family:'Liberation Sans',sans-serif;left:72px;width:400px;text-align:right;white-space:pre;">audusdm</div><div class="t" style="top:350.69px;font-size:11px;color:#000;font-family:'Liberation Sans',sans-serif;left:154px;width:400px;text-align:right;white-space:pre;">0.74502</div><div class="t" style="top:350.69px;font-size:11px;color:#000;font-family:'Liberation Sans',sans-serif;left:236px;width:400px;text-align:right;white-space:pre;">0.00000</div><div class="t" style="top:350.69px;font-size:11px;color:#000;font-family:'Liberation Sans',sans-serif;left:317px;width:400px;text-align:right;white-space:pre;">0.74490</div><div class="t" style="top:350.69px;font-size:11px;color:#000;font-family:'Liberation Sans',sans-serif;left:400px;width:400px;text-align:right;white-space:pre;">0.74506</div><div class="t" style="top:350.69px;font-size:11px;color:#000;font-family:'Liberation Sans',sans-serif;left:482px;width:400px;text-align:right;white-space:pre;">0.00</div><div class="t" style="top:350.69px;font-size:11px;color:#000;font-family:'Liberation Sans',sans-serif;left:564px;width:400px;text-align:right;white-space:pre;">0.00</div><div class="t" style="top:350.69px;font-size:11px;color:#000;font-family:'Liberation Sans',sans-serif;left:668px;width:400px;text-align:right;white-space:pre;">-0.04</div><div class="t" style="top:350.10px;font-size:11.7px;color:#000;font-family:'Liberation Sans',sans-serif;left:941px;width:400px;text-align:right;white-space:pre;">Kira-h</div><svg class="r" style="left:1076px;top:352px" width="9" height="9" viewBox="0 0 9 9"><path d="M1 1 L8 8 M8 1 L1 8" stroke="#9a9a9a" stroke-width="1.7"/></svg><svg class="r" style="left:19px;top:369px" width="15" height="15" viewBox="0 0 15 15"><path d="M0.5 0.5 h7 l3 3 v10 h-10 z" fill="#fbfbfb" stroke="#6a6a6a"/><path d="M7.5 0.5 v3 h3" fill="none" stroke="#6a6a6a"/><circle cx="10.5" cy="11" r="3.6" fill="#e8400f" stroke="#fff" stroke-width="0.6"/></svg><div class="t" style="top:370.69px;font-size:11px;color:#000;font-family:'Liberation Sans',sans-serif;left:38.5px;white-space:pre;">27891674</div><div class="t" style="top:370.69px;font-size:11px;color:#000;font-family:'Liberation Sans',sans-serif;left:-133px;width:400px;text-align:right;white-space:pre;">2021.11.02 14:39:15</div><div class="t" style="top:370.10px;font-size:11.7px;color:#000;font-family:'Liberation Sans',sans-serif;left:-59px;width:400px;text-align:right;white-space:pre;">sell</div><div class="t" style="top:370.69px;font-size:11px;color:#000;font-family:'Liberation Sans',sans-serif;left:-2px;width:400px;text-align:right;white-space:pre;">0.01</div><div class="t" style="top:370.10px;font-size:11.7px;color:#000;font-family:'Liberation Sans',sans-serif;left:72px;width:400px;text-align:right;white-space:pre;">audusdm</div><div class="t" style="top:370.69px;font-size:11px;color:#000;font-family:'Liberation Sans',sans-serif;left:154px;width:400px;text-align:right;white-space:pre;">0.74502</div><div class="t" style="top:370.69px;font-size:11px;color:#000;font-family:'Liberation Sans',sans-serif;left:236px;width:400px;text-align:right;white-space:pre;">0.00000</div><div class="t" style="top:370.69px;font-size:11px;color:#000;font-family:'Liberation Sans',sans-serif;left:317px;width:400px;text-align:right;white-space:pre;">0.74490</div><div class="t" style="top:370.69px;font-size:11px;color:#000;font-family:'Liberation Sans',sans-serif;left:400px;width:400px;text-align:right;white-space:pre;">0.74506</div><div class="t" style="top:370.69px;font-size:11px;color:#000;font-family:'Liberation Sans',sans-serif;left:482px;width:400px;text-align:right;white-space:pre;">0.00</div><div class="t" style="top:370.69px;font-size:11px;color:#000;font-family:'Liberation Sans',sans-serif;left:564px;width:400px;text-align:right;white-space:pre;">0.00</div><div class="t" style="top:370.69px;font-size:11px;color:#000;font-family:'Liberation Sans',sans-serif;left:668px;width:400px;text-align:right;white-space:pre;">-0.04</div><div class="t" style="top:370.10px;font-size:11.7px;color:#000;font-family:'Liberation Sans',sans-serif;left:941px;width:400px;text-align:right;white-space:pre;">Kira-h</div><svg class="r" style="left:1076px;top:372px" width="9" height="9" viewBox="0 0 9 9"><path d="M1 1 L8 8 M8 1 L1 8" stroke="#9a9a9a" stroke-width="1.7"/></svg><svg class="r" style="left:19px;top:389px" width="15" height="15" viewBox="0 0 15 15"><path d="M0.5 0.5 h7 l3 3 v10 h-10 z" fill="#fbfbfb" stroke="#6a6a6a"/><path d="M7.5 0.5 v3 h3" fill="none" stroke="#6a6a6a"/><circle cx="10.5" cy="11" r="3.6" fill="#e8400f" stroke="#fff" stroke-width="0.6"/></svg><div class="t" style="top:390.69px;font-size:11px;color:#000;font-family:'Liberation Sans',sans-serif;left:38.5px;white-space:pre;">27891678</div><div class="t" style="top:390.69px;font-size:11px;color:#000;font-family:'Liberation Sans',sans-serif;left:-133px;width:400px;text-align:right;white-space:pre;">2021.11.02 14:39:18</div><div class="t" style="top:390.10px;font-size:11.7px;color:#000;font-family:'Liberation Sans',sans-serif;left:-59px;width:400px;text-align:right;white-space:pre;">sell</div><div class="t" style="top:390.69px;font-size:11px;color:#000;font-family:'Liberation Sans',sans-serif;left:-2px;width:400px;text-align:right;white-space:pre;">0.01</div><div class="t" style="top:390.10px;font-size:11.7px;color:#000;font-family:'Liberation Sans',sans-serif;left:72px;width:400px;text-align:right;white-space:pre;">audusdm</div><div class="t" style="top:390.69px;font-size:11px;color:#000;font-family:'Liberation Sans',sans-serif;left:154px;width:400px;text-align:right;white-space:pre;">0.74501</div><div class="t" style="top:390.69px;font-size:11px;color:#000;font-family:'Liberation Sans',sans-serif;left:236px;width:400px;text-align:right;white-space:pre;">0.00000</div><div class="t" style="top:390.69px;font-size:11px;color:#000;font-family:'Liberation Sans',sans-serif;left:317px;width:400px;text-align:right;white-space:pre;">0.74490</div><div class="t" style="top:390.69px;font-size:11px;color:#000;font-family:'Liberation Sans',sans-serif;left:400px;width:400px;text-align:right;white-space:pre;">0.74506</div><div class="t" style="top:390.69px;font-size:11px;color:#000;font-family:'Liberation Sans',sans-serif;left:482px;width:400px;text-align:right;white-space:pre;">0.00</div><div class="t" style="top:390.69px;font-size:11px;color:#000;font-family:'Liberation Sans',sans-serif;left:564px;width:400px;text-align:right;white-space:pre;">0.00</div><div class="t" style="top:390.69px;font-size:11px;color:#000;font-family:'Liberation Sans',sans-serif;left:668px;width:400px;text-align:right;white-space:pre;">-0.05</div><div class="t" style="top:390.10px;font-size:11.7px;color:#000;font-family:'Liberation Sans',sans-serif;left:941px;width:400px;text-align:right;white-space:pre;">Kira-h</div><svg class="r" style="left:1076px;top:392px" width="9" height="9" viewBox="0 0 9 9"><path d="M1 1 L8 8 M8 1 L1 8" stroke="#9a9a9a" stroke-width="1.7"/></svg><svg class="r" style="left:19px;top:409px" width="15" height="15" viewBox="0 0 15 15"><path d="M0.5 0.5 h7 l3 3 v10 h-10 z" fill="#fbfbfb" stroke="#6a6a6a"/><path d="M7.5 0.5 v3 h3" fill="none" stroke="#6a6a6a"/><circle cx="10.5" cy="11" r="3.6" fill="#e8400f" stroke="#fff" stroke-width="0.6"/></svg><div class="t" style="top:410.69px;font-size:11px;color:#000;font-family:'Liberation Sans',sans-serif;left:38.5px;white-space:pre;">27891680</div><div class="t" style="top:410.69px;font-size:11px;color:#000;font-family:'Liberation Sans',sans-serif;left:-133px;width:400px;text-align:right;white-space:pre;">2021.11.02 14:39:18</div><div class="t" style="top:410.10px;font-size:11.7px;color:#000;font-family:'Liberation Sans',sans-serif;left:-59px;width:400px;text-align:right;white-space:pre;">sell</div><div class="t" style="top:410.69px;font-size:11px;color:#000;font-family:'Liberation Sans',sans-serif;left:-2px;width:400px;text-align:right;white-space:pre;">0.01</div><div class="t" style="top:410.10px;font-size:11.7px;color:#000;font-family:'Liberation Sans',sans-serif;left:72px;width:400px;text-align:right;white-space:pre;">audusdm</div><div class="t" style="top:410.69px;font-size:11px;color:#000;font-family:'Liberation Sans',sans-serif;left:154px;width:400px;text-align:right;white-space:pre;">0.74501</div><div class="t" style="top:410.69px;font-size:11px;color:#000;font-family:'Liberation Sans',sans-serif;left:236px;width:400px;text-align:right;white-space:pre;">0.00000</div><div class="t" style="top:410.69px;font-size:11px;color:#000;font-family:'Liberation Sans',sans-serif;left:317px;width:400px;text-align:right;white-space:pre;">0.74490</div><div class="t" style="top:410.69px;font-size:11px;color:#000;font-family:'Liberation Sans',sans-serif;left:400px;width:400px;text-align:right;white-space:pre;">0.74506</div><div class="t" style="top:410.69px;font-size:11px;color:#000;font-family:'Liberation Sans',sans-serif;left:482px;width:400px;text-align:right;white-space:pre;">0.00</div><div class="t" style="top:410.69px;font-size:11px;color:#000;font-family:'Liberation Sans',sans-serif;left:564px;width:400px;text-align:right;white-space:pre;">0.00</div><div class="t" style="top:410.69px;font-size:11px;color:#000;font-family:'Liberation Sans',sans-serif;left:668px;width:400px;text-align:right;white-space:pre;">-0.05</div><div class="t" style="top:410.10px;font-size:11.7px;color:#000;font-family:'Liberation Sans',sans-serif;left:941px;width:400px;text-align:right;white-space:pre;">Kira-h</div><svg class="r" style="left:1076px;top:412px" width="9" height="9" viewBox="0 0 9 9"><path d="M1 1 L8 8 M8 1 L1 8" stroke="#9a9a9a" stroke-width="1.7"/></svg><svg class="r" style="left:19px;top:429px" width="15" height="15" viewBox="0 0 15 15"><path d="M0.5 0.5 h7 l3 3 v10 h-10 z" fill="#fbfbfb" stroke="#6a6a6a"/><path d="M7.5 0.5 v3 h3" fill="none" stroke="#6a6a6a"/><circle cx="10.5" cy="11" r="3.6" fill="#e8400f" stroke="#fff" stroke-width="0.6"/></svg><div class="t" style="top:430.69px;font-size:11px;color:#000;font-family:'Liberation Sans',sans-serif;left:38.5px;white-space:pre;">27891687</div><div class="t" style="top:430.69px;font-size:11px;color:#000;font-family:'Liberation Sans',sans-serif;left:-133px;width:400px;text-align:right;white-space:pre;">2021.11.02 14:39:21</div><div class="t" style="top:430.10px;font-size:11.7px;color:#000;font-family:'Liberation Sans',sans-serif;left:-59px;width:400px;text-align:right;white-space:pre;">sell</div><div class="t" style="top:430.69px;font-size:11px;color:#000;font-family:'Liberation Sans',sans-serif;left:-2px;width:400px;text-align:right;white-space:pre;">0.01</div><div class="t" style="top:430.10px;font-size:11.7px;color:#000;font-family:'Liberation Sans',sans-serif;left:72px;width:400px;text-align:right;white-space:pre;">audusdm</div><div class="t" style="top:430.69px;font-size:11px;color:#000;font-family:'Liberation Sans',sans-serif;left:154px;width:400px;text-align:right;white-space:pre;">0.74503</div><div class="t" style="top:430.69px;font-size:11px;color:#000;font-family:'Liberation Sans',sans-serif;left:236px;width:400px;text-align:right;white-space:pre;">0.00000</div><div class="t" style="top:430.69px;font-size:11px;color:#000;font-family:'Liberation Sans',sans-serif;left:317px;width:400px;text-align:right;white-space:pre;">0.74490</div><div class="t" style="top:430.69px;font-size:11px;color:#000;font-family:'Liberation Sans',sans-serif;left:400px;width:400px;text-align:right;white-space:pre;">0.74506</div><div class="t" style="top:430.69px;font-size:11px;color:#000;font-family:'Liberation Sans',sans-serif;left:482px;width:400px;text-align:right;white-space:pre;">0.00</div><div class="t" style="top:430.69px;font-size:11px;color:#000;font-family:'Liberation Sans',sans-serif;left:564px;width:400px;text-align:right;white-space:pre;">0.00</div><div class="t" style="top:430.69px;font-size:11px;color:#000;font-family:'Liberation Sans',sans-serif;left:668px;width:400px;text-align:right;white-space:pre;">-0.03</div><div class="t" style="top:430.10px;font-size:11.7px;color:#000;font-family:'Liberation Sans',sans-serif;left:941px;width:400px;text-align:right;white-space:pre;">Kira-h</div><svg class="r" style="left:1076px;top:432px" width="9" height="9" viewBox="0 0 9 9"><path d="M1 1 L8 8 M8 1 L1 8" stroke="#9a9a9a" stroke-width="1.7"/></svg><svg class="r" style="left:19px;top:449px" width="15" height="15" viewBox="0 0 15 15"><path d="M0.5 0.5 h7 l3 3 v10 h-10 z" fill="#fbfbfb" stroke="#6a6a6a"/><path d="M7.5 0.5 v3 h3" fill="none" stroke="#6a6a6a"/><circle cx="10.5" cy="11" r="3.6" fill="#e8400f" stroke="#fff" stroke-width="0.6"/></svg><div class="t" style="top:450.69px;font-size:11px;color:#000;font-family:'Liberation Sans',sans-serif;left:38.5px;white-space:pre;">27891690</div><div class="t" style="top:450.69px;font-size:11px;color:#000;font-family:'Liberation Sans',sans-serif;left:-133px;width:400px;text-align:right;white-space:pre;">2021.11.02 14:39:22</div><div class="t" style="top:450.10px;font-size:11.7px;color:#000;font-family:'Liberation Sans',sans-serif;left:-59px;width:400px;text-align:right;white-space:pre;">sell</div><div class="t" style="top:450.69px;font-size:11px;color:#000;font-family:'Liberation Sans',sans-serif;left:-2px;width:400px;text-align:right;white-space:pre;">0.01</div><div class="t" style="top:450.10px;font-size:11.7px;color:#000;font-family:'Liberation Sans',sans-serif;left:72px;width:400px;text-align:right;white-space:pre;">audusdm</div><div class="t" style="top:450.69px;font-size:11px;color:#000;font-family:'Liberation Sans',sans-serif;left:154px;width:400px;text-align:right;white-space:pre;">0.74504</div><div class="t" style="top:450.69px;font-size:11px;color:#000;font-family:'Liberation Sans',sans-serif;left:236px;width:400px;text-align:right;white-space:pre;">0.00000</div><div class="t" style="top:450.69px;font-size:11px;color:#000;font-family:'Liberation Sans',sans-serif;left:317px;width:400px;text-align:right;white-space:pre;">0.74490</div><div class="t" style="top:450.69px;font-size:11px;color:#000;font-family:'Liberation Sans',sans-serif;left:400px;width:400px;text-align:right;white-space:pre;">0.74506</div><div class="t" style="top:450.69px;font-size:11px;color:#000;font-family:'Liberation Sans',sans-serif;left:482px;width:400px;text-align:right;white-space:pre;">0.00</div><div class="t" style="top:450.69px;font-size:11px;color:#000;font-family:'Liberation Sans',sans-serif;left:564px;width:400px;text-align:right;white-space:pre;">0.00</div><div class="t" style="top:450.69px;font-size:11px;color:#000;font-family:'Liberation Sans',sans-serif;left:668px;width:400px;text-align:right;white-space:pre;">-0.02</div><div class="t" style="top:450.10px;font-size:11.7px;color:#000;font-family:'Liberation Sans',sans-serif;left:941px;width:400px;text-align:right;white-space:pre;">Kira-h</div><svg class="r" style="left:1076px;top:452px" width="9" height="9" viewBox="0 0 9 9"><path d="M1 1 L8 8 M8 1 L1 8" stroke="#9a9a9a" stroke-width="1.7"/></svg><svg class="r" style="left:19px;top:469px" width="15" height="15" viewBox="0 0 15 15"><path d="M0.5 0.5 h7 l3 3 v10 h-10 z" fill="#fbfbfb" stroke="#6a6a6a"/><path d="M7.5 0.5 v3 h3" fill="none" stroke="#6a6a6a"/><circle cx="10.5" cy="11" r="3.6" fill="#e8400f" stroke="#fff" stroke-width="0.6"/></svg><div class="t" style="top:470.69px;font-size:11px;color:#000;font-family:'Liberation Sans',sans-serif;left:38.5px;white-space:pre;">27891693</div><div class="t" style="top:470.69px;font-size:11px;color:#000;font-family:'Liberation Sans',sans-serif;left:-133px;width:400px;text-align:right;white-space:pre;">2021.11.02 14:39:23</div><div class="t" style="top:470.10px;font-size:11.7px;color:#000;font-family:'Liberation Sans',sans-serif;left:-59px;width:400px;text-align:right;white-space:pre;">sell</div><div class="t" style="top:470.69px;font-size:11px;color:#000;font-family:'Liberation Sans',sans-serif;left:-2px;width:400px;text-align:right;white-space:pre;">0.01</div><div class="t" style="top:470.10px;font-size:11.7px;color:#000;font-family:'Liberation Sans',sans-serif;left:72px;width:400px;text-align:right;white-space:pre;">audusdm</div><div class="t" style="top:470.69px;font-size:11px;color:#000;font-family:'Liberation Sans',sans-serif;left:154px;width:400px;text-align:right;white-space:pre;">0.74507</div><div class="t" style="top:470.69px;font-size:11px;color:#000;font-family:'Liberation Sans',sans-serif;left:236px;width:400px;text-align:right;white-space:pre;">0.00000</div><div class="t" style="top:470.69px;font-size:11px;color:#000;font-family:'Liberation Sans',sans-serif;left:317px;width:400px;text-align:right;white-space:pre;">0.74490</div><div class="t" style="top:470.69px;font-size:11px;color:#000;font-family:'Liberation Sans',sans-serif;left:400px;width:400px;text-align:right;white-space:pre;">0.74506</div><div class="t" style="top:470.69px;font-size:11px;color:#000;font-family:'Liberation Sans',sans-serif;left:482px;width:400px;text-align:right;white-space:pre;">0.00</div><div class="t" style="top:470.69px;font-size:11px;color:#000;font-family:'Liberation Sans',sans-serif;left:564px;width:400px;text-align:right;white-space:pre;">0.00</div><div class="t" style="top:470.69px;font-size:11px;color:#000;font-family:'Liberation Sans',sans-serif;left:668px;width:400px;text-align:right;white-space:pre;">0.01</div><div class="t" style="top:470.10px;font-size:11.7px;color:#000;font-family:'Liberation Sans',sans-serif;left:941px;width:400px;text-align:right;white-space:pre;">Kira-h</div><svg class="r" style="left:1076px;top:472px" width="9" height="9" viewBox="0 0 9 9"><path d="M1 1 L8 8 M8 1 L1 8" stroke="#9a9a9a" stroke-width="1.7"/></svg><svg class="r" style="left:19px;top:489px" width="15" height="15" viewBox="0 0 15 15"><path d="M0.5 0.5 h7 l3 3 v10 h-10 z" fill="#fbfbfb" stroke="#6a6a6a"/><path d="M7.5 0.5 v3 h3" fill="none" stroke="#6a6a6a"/><circle cx="10.5" cy="11" r="3.6" fill="#e8400f" stroke="#fff" stroke-width="0.6"/></svg><div class="t" style="top:490.69px;font-size:11px;color:#000;font-family:'Liberation Sans',sans-serif;left:38.5px;white-space:pre;">27891696</div><div class="t" style="top:490.69px;font-size:11px;color:#000;font-family:'Liberation Sans',sans-serif;left:-133px;width:400px;text-align:right;white-space:pre;">2021.11.02 14:39:23</div><div class="t" style="top:490.10px;font-size:11.7px;color:#000;font-family:'Liberation Sans',sans-serif;left:-59px;width:400px;text-align:right;white-space:pre;">sell</div><div class="t" style="top:490.69px;font-size:11px;color:#000;font-family:'Liberation Sans',sans-serif;left:-2px;width:400px;text-align:right;white-space:pre;">0.01</div><div class="t" style="top:490.10px;font-size:11.7px;color:#000;font-family:'Liberation Sans',sans-serif;left:72px;width:400px;text-align:right;white-space:pre;">audusdm</div><div class="t" style="top:490.69px;font-size:11px;color:#000;font-family:'Liberation Sans',sans-serif;left:154px;width:400px;text-align:right;white-space:pre;">0.74508</div><div class="t" style="top:490.69px;font-size:11px;color:#000;font-family:'Liberation Sans',sans-serif;left:236px;width:400px;text-align:right;white-space:pre;">0.00000</div><div class="t" style="top:490.69px;font-size:11px;color:#000;font-family:'Liberation Sans',sans-serif;left:317px;width:400px;text-align:right;white-space:pre;">0.74490</div><div class="t" style="top:490.69px;font-size:11px;color:#000;font-family:'Liberation Sans',sans-serif;left:400px;width:400px;text-align:right;white-space:pre;">0.74506</div><div class="t" style="top:490.69px;font-size:11px;color:#000;font-family:'Liberation Sans',sans-serif;left:482px;width:400px;text-align:right;white-space:pre;">0.00</div><div class="t" style="top:490.69px;font-size:11px;color:#000;font-family:'Liberation Sans',sans-serif;left:564px;width:400px;text-align:right;white-space:pre;">0.00</div><div class="t" style="top:490.69px;font-size:11px;color:#000;font-family:'Liberation Sans',sans-serif;left:668px;width:400px;text-align:right;white-space:pre;">0.02</div><div class="t" style="top:490.10px;font-size:11.7px;color:#000;font-family:'Liberation Sans',sans-serif;left:941px;width:400px;text-align:right;white-space:pre;">Kira-h</div><svg class="r" style="left:1076px;top:492px" width="9" height="9" viewBox="0 0 9 9"><path d="M1 1 L8 8 M8 1 L1 8" stroke="#9a9a9a" stroke-width="1.7"/></svg><svg class="r" style="left:19px;top:509px" width="15" height="15" viewBox="0 0 15 15"><path d="M0.5 0.5 h7 l3 3 v10 h-10 z" fill="#fbfbfb" stroke="#6a6a6a"/><path d="M7.5 0.5 v3 h3" fill="none" stroke="#6a6a6a"/><circle cx="10.5" cy="11" r="3.6" fill="#e8400f" stroke="#fff" stroke-width="0.6"/></svg><div class="t" style="top:510.69px;font-size:11px;color:#000;font-family:'Liberation Sans',sans-serif;left:38.5px;white-space:pre;">27891701</div><div class="t" style="top:510.69px;font-size:11px;color:#000;font-family:'Liberation Sans',sans-serif;left:-133px;width:400px;text-align:right;white-space:pre;">2021.11.02 14:39:26</div><div class="t" style="top:510.10px;font-size:11.7px;color:#000;font-family:'Liberation Sans',sans-serif;left:-59px;width:400px;text-align:right;white-space:pre;">sell</div><div class="t" style="top:510.69px;font-size:11px;color:#000;font-family:'Liberation Sans',sans-serif;left:-2px;width:400px;text-align:right;white-space:pre;">0.01</div><div class="t" style="top:510.10px;font-size:11.7px;color:#000;font-family:'Liberation Sans',sans-serif;left:72px;width:400px;text-align:right;white-space:pre;">audusdm</div><div class="t" style="top:510.69px;font-size:11px;color:#000;font-family:'Liberation Sans',sans-serif;left:154px;width:400px;text-align:right;white-space:pre;">0.74507</div><div class="t" style="top:510.69px;font-size:11px;color:#000;font-family:'Liberation Sans',sans-serif;left:236px;width:400px;text-align:right;white-space:pre;">0.00000</div><div class="t" style="top:510.69px;font-size:11px;color:#000;font-family:'Liberation Sans',sans-serif;left:317px;width:400px;text-align:right;white-space:pre;">0.74490</div><div class="t" style="top:510.69px;font-size:11px;color:#000;font-family:'Liberation Sans',sans-serif;left:400px;width:400px;text-align:right;white-space:pre;">0.74506</div><div class="t" style="top:510.69px;font-size:11px;color:#000;font-family:'Liberation Sans',sans-serif;left:482px;width:400px;text-align:right;white-space:pre;">0.00</div><div class="t" style="top:510.69px;font-size:11px;color:#000;font-family:'Liberation Sans',sans-serif;left:564px;width:400px;text-align:right;white-space:pre;">0.00</div><div class="t" style="top:510.69px;font-size:11px;color:#000;font-family:'Liberation Sans',sans-serif;left:668px;width:400px;text-align:right;white-space:pre;">0.01</div><div class="t" style="top:510.10px;font-size:11.7px;color:#000;font-family:'Liberation Sans',sans-serif;left:941px;width:400px;text-align:right;white-space:pre;">Kira-h</div><svg class="r" style="left:1076px;top:512px" width="9" height="9" viewBox="0 0 9 9"><path d="M1 1 L8 8 M8 1 L1 8" stroke="#9a9a9a" stroke-width="1.7"/></svg><svg class="r" style="left:19px;top:529px" width="15" height="15" viewBox="0 0 15 15"><path d="M0.5 0.5 h7 l3 3 v10 h-10 z" fill="#fbfbfb" stroke="#6a6a6a"/><path d="M7.5 0.5 v3 h3" fill="none" stroke="#6a6a6a"/><circle cx="10.5" cy="11" r="3.6" fill="#e8400f" stroke="#fff" stroke-width="0.6"/></svg><div class="t" style="top:530.69px;font-size:11px;color:#000;font-family:'Liberation Sans',sans-serif;left:38.5px;white-space:pre;">27891702</div><div class="t" style="top:530.69px;font-size:11px;color:#000;font-family:'Liberation Sans',sans-serif;left:-133px;width:400px;text-align:right;white-space:pre;">2021.11.02 14:39:27</div><div class="t" style="top:530.10px;font-size:11.7px;color:#000;font-family:'Liberation Sans',sans-serif;left:-59px;width:400px;text-align:right;white-space:pre;">sell</div><div class="t" style="top:530.69px;font-size:11px;color:#000;font-family:'Liberation Sans',sans-serif;left:-2px;width:400px;text-align:right;white-space:pre;">0.01</div><div class="t" style="top:530.10px;font-size:11.7px;color:#000;font-family:'Liberation Sans',sans-serif;left:72px;width:400px;text-align:right;white-space:pre;">audusdm</div><div class="t" style="top:530.69px;font-size:11px;color:#000;font-family:'Liberation Sans',sans-serif;left:154px;width:400px;text-align:right;white-space:pre;">0.74507</div><div class="t" style="top:530.69px;font-size:11px;color:#000;font-family:'Liberation Sans',sans-serif;left:236px;width:400px;text-align:right;white-space:pre;">0.00000</div><div class="t" style="top:530.69px;font-size:11px;color:#000;font-family:'Liberation Sans',sans-serif;left:317px;width:400px;text-align:right;white-space:pre;">0.74490</div><div class="t" style="top:530.69px;font-size:11px;color:#000;font-family:'Liberation Sans',sans-serif;left:400px;width:400px;text-align:right;white-space:pre;">0.74506</div><div class="t" style="top:530.69px;font-size:11px;color:#000;font-family:'Liberation Sans',sans-serif;left:482px;width:400px;text-align:right;white-space:pre;">0.00</div><div class="t" style="top:530.69px;font-size:11px;color:#000;font-family:'Liberation Sans',sans-serif;left:564px;width:400px;text-align:right;white-space:pre;">0.00</div><div class="t" style="top:530.69px;font-size:11px;color:#000;font-family:'Liberation Sans',sans-serif;left:668px;width:400px;text-align:right;white-space:pre;">0.01</div><div class="t" style="top:530.10px;font-size:11.7px;color:#000;font-family:'Liberation Sans',sans-serif;left:941px;width:400px;text-align:right;white-space:pre;">Kira-h</div><svg class="r" style="left:1076px;top:532px" width="9" height="9" viewBox="0 0 9 9"><path d="M1 1 L8 8 M8 1 L1 8" stroke="#9a9a9a" stroke-width="1.7"/></svg><svg class="r" style="left:19px;top:549px" width="15" height="15" viewBox="0 0 15 15"><path d="M0.5 0.5 h7 l3 3 v10 h-10 z" fill="#fbfbfb" stroke="#6a6a6a"/><path d="M7.5 0.5 v3 h3" fill="none" stroke="#6a6a6a"/><circle cx="10.5" cy="11" r="3.6" fill="#e8400f" stroke="#fff" stroke-width="0.6"/></svg><div class="t" style="top:550.69px;font-size:11px;color:#000;font-family:'Liberation Sans',sans-serif;left:38.5px;white-space:pre;">27891711</div><div class="t" style="top:550.69px;font-size:11px;color:#000;font-family:'Liberation Sans',sans-serif;left:-133px;width:400px;text-align:right;white-space:pre;">2021.11.02 14:39:30</div><div class="t" style="top:550.10px;font-size:11.7px;color:#000;font-family:'Liberation Sans',sans-serif;left:-59px;width:400px;text-align:right;white-space:pre;">sell</div><div class="t" style="top:550.69px;font-size:11px;color:#000;font-family:'Liberation Sans',sans-serif;left:-2px;width:400px;text-align:right;white-space:pre;">0.01</div><div class="t" style="top:550.10px;font-size:11.7px;color:#000;font-family:'Liberation Sans',sans-serif;left:72px;width:400px;text-align:right;white-space:pre;">audusdm</div><div class="t" style="top:550.69px;font-size:11px;color:#000;font-family:'Liberation Sans',sans-serif;left:154px;width:400px;text-align:right;white-space:pre;">0.74507</div><div class="t" style="top:550.69px;font-size:11px;color:#000;font-family:'Liberation Sans',sans-serif;left:236px;width:400px;text-align:right;white-space:pre;">0.00000</div><div class="t" style="top:550.69px;font-size:11px;color:#000;font-family:'Liberation Sans',sans-serif;left:317px;width:400px;text-align:right;white-space:pre;">0.74490</div><div class="t" style="top:550.69px;font-size:11px;color:#000;font-family:'Liberation Sans',sans-serif;left:400px;width:400px;text-align:right;white-space:pre;">0.74506</div><div class="t" style="top:550.69px;font-size:11px;color:#000;font-family:'Liberation Sans',sans-serif;left:482px;width:400px;text-align:right;white-space:pre;">0.00</div><div class="t" style="top:550.69px;font-size:11px;color:#000;font-family:'Liberation Sans',sans-serif;left:564px;width:400px;text-align:right;white-space:pre;">0.00</div><div class="t" style="top:550.69px;font-size:11px;color:#000;font-family:'Liberation Sans',sans-serif;left:668px;width:400px;text-align:right;white-space:pre;">0.01</div><div class="t" style="top:550.10px;font-size:11.7px;color:#000;font-family:'Liberation Sans',sans-serif;left:941px;width:400px;text-align:right;white-space:pre;">Kira-h</div><svg class="r" style="left:1076px;top:552px" width="9" height="9" viewBox="0 0 9 9"><path d="M1 1 L8 8 M8 1 L1 8" stroke="#9a9a9a" stroke-width="1.7"/></svg><svg class="r" style="left:19px;top:569px" width="15" height="15" viewBox="0 0 15 15"><path d="M0.5 0.5 h7 l3 3 v10 h-10 z" fill="#fbfbfb" stroke="#6a6a6a"/><path d="M7.5 0.5 v3 h3" fill="none" stroke="#6a6a6a"/><circle cx="10.5" cy="11" r="3.6" fill="#e8400f" stroke="#fff" stroke-width="0.6"/></svg><div class="t" style="top:570.69px;font-size:11px;color:#000;font-family:'Liberation Sans',sans-serif;left:38.5px;white-space:pre;">27891713</div><div class="t" style="top:570.69px;font-size:11px;color:#000;font-family:'Liberation Sans',sans-serif;left:-133px;width:400px;text-align:right;white-space:pre;">2021.11.02 14:39:31</div><div class="t" style="top:570.10px;font-size:11.7px;color:#000;font-family:'Liberation Sans',sans-serif;left:-59px;width:400px;text-align:right;white-space:pre;">sell</div><div class="t" style="top:570.69px;font-size:11px;color:#000;font-family:'Liberation Sans',sans-serif;left:-2px;width:400px;text-align:right;white-space:pre;">0.01</div><div class="t" style="top:570.10px;font-size:11.7px;color:#000;font-family:'Liberation Sans',sans-serif;left:72px;width:400px;text-align:right;white-space:pre;">audusdm</div><div class="t" style="top:570.69px;font-size:11px;color:#000;font-family:'Liberation Sans',sans-serif;left:154px;width:400px;text-align:right;white-space:pre;">0.74508</div><div class="t" style="top:570.69px;font-size:11px;color:#000;font-family:'Liberation Sans',sans-serif;left:236px;width:400px;text-align:right;white-space:pre;">0.00000</div><div class="t" style="top:570.69px;font-size:11px;color:#000;font-family:'Liberation Sans',sans-serif;left:317px;width:400px;text-align:right;white-space:pre;">0.74490</div><div class="t" style="top:570.69px;font-size:11px;color:#000;font-family:'Liberation Sans',sans-serif;left:400px;width:400px;text-align:right;white-space:pre;">0.74506</div><div class="t" style="top:570.69px;font-size:11px;color:#000;font-family:'Liberation Sans',sans-serif;left:482px;width:400px;text-align:right;white-space:pre;">0.00</div><div class="t" style="top:570.69px;font-size:11px;color:#000;font-family:'Liberation Sans',sans-serif;left:564px;width:400px;text-align:right;white-space:pre;">0.00</div><div class="t" style="top:570.69px;font-size:11px;color:#000;font-family:'Liberation Sans',sans-serif;left:668px;width:400px;text-align:right;white-space:pre;">0.02</div><div class="t" style="top:570.10px;font-size:11.7px;color:#000;font-family:'Liberation Sans',sans-serif;left:941px;width:400px;text-align:right;white-space:pre;">Kira-h</div><svg class="r" style="left:1076px;top:572px" width="9" height="9" viewBox="0 0 9 9"><path d="M1 1 L8 8 M8 1 L1 8" stroke="#9a9a9a" stroke-width="1.7"/></svg><svg class="r" style="left:19px;top:589px" width="15" height="15" viewBox="0 0 15 15"><path d="M0.5 0.5 h7 l3 3 v10 h-10 z" fill="#fbfbfb" stroke="#6a6a6a"/><path d="M7.5 0.5 v3 h3" fill="none" stroke="#6a6a6a"/><circle cx="10.5" cy="11" r="3.6" fill="#e8400f" stroke="#fff" stroke-width="0.6"/></svg><div class="t" style="top:590.69px;font-size:11px;color:#000;font-family:'Liberation Sans',sans-serif;left:38.5px;white-space:pre;">27891716</div><div class="t" style="top:590.69px;font-size:11px;color:#000;font-family:'Liberation Sans',sans-serif;left:-133px;width:400px;text-align:right;white-space:pre;">2021.11.02 14:39:31</div><div class="t" style="top:590.10px;font-size:11.7px;color:#000;font-family:'Liberation Sans',sans-serif;left:-59px;width:400px;text-align:right;white-space:pre;">sell</div><div class="t" style="top:590.69px;font-size:11px;color:#000;font-family:'Liberation Sans',sans-serif;left:-2px;width:400px;text-align:right;white-space:pre;">0.01</div><div class="t" style="top:590.10px;font-size:11.7px;color:#000;font-family:'Liberation Sans',sans-serif;left:72px;width:400px;text-align:right;white-space:pre;">audusdm</div><div class="t" style="top:590.69px;font-size:11px;color:#000;font-family:'Liberation Sans',sans-serif;left:154px;width:400px;text-align:right;white-space:pre;">0.74507</div><div class="t" style="top:590.69px;font-size:11px;color:#000;font-family:'Liberation Sans',sans-serif;left:236px;width:400px;text-align:right;white-space:pre;">0.00000</div><div class="t" style="top:590.69px;font-size:11px;color:#000;font-family:'Liberation Sans',sans-serif;left:317px;width:400px;text-align:right;white-space:pre;">0.74490</div><div class="t" style="top:590.69px;font-size:11px;color:#000;font-family:'Liberation Sans',sans-serif;left:400px;width:400px;text-align:right;white-space:pre;">0.74506</div><div class="t" style="top:590.69px;font-size:11px;color:#000;font-family:'Liberation Sans',sans-serif;left:482px;width:400px;text-align:right;white-space:pre;">0.00</div><div class="t" style="top:590.69px;font-size:11px;color:#000;font-family:'Liberation Sans',sans-serif;left:564px;width:400px;text-align:right;white-space:pre;">0.00</div><div class="t" style="top:590.69px;font-size:11px;color:#000;font-family:'Liberation Sans',sans-serif;left:668px;width:400px;text-align:right;white-space:pre;">0.01</div><div class="t" style="top:590.10px;font-size:11.7px;color:#000;font-family:'Liberation Sans',sans-serif;left:941px;width:400px;text-align:right;white-space:pre;">Kira-h</div><svg class="r" style="left:1076px;top:592px" width="9" height="9" viewBox="0 0 9 9"><path d="M1 1 L8 8 M8 1 L1 8" stroke="#9a9a9a" stroke-width="1.7"/></svg><svg class="r" style="left:19px;top:609px" width="15" height="15" viewBox="0 0 15 15"><path d="M0.5 0.5 h7 l3 3 v10 h-10 z" fill="#fbfbfb" stroke="#6a6a6a"/><path d="M7.5 0.5 v3 h3" fill="none" stroke="#6a6a6a"/><circle cx="10.5" cy="11" r="3.6" fill="#e8400f" stroke="#fff" stroke-width="0.6"/></svg><div class="t" style="top:610.69px;font-size:11px;color:#000;font-family:'Liberation Sans',sans-serif;left:38.5px;white-space:pre;">27891718</div><div class="t" style="top:610.69px;font-size:11px;color:#000;font-family:'Liberation Sans',sans-serif;left:-133px;width:400px;text-align:right;white-space:pre;">2021.11.02 14:39:32</div><div class="t" style="top:610.10px;font-size:11.7px;color:#000;font-family:'Liberation Sans',sans-serif;left:-59px;width:400px;text-align:right;white-space:pre;">sell</div><div class="t" style="top:610.69px;font-size:11px;color:#000;font-family:'Liberation Sans',sans-serif;left:-2px;width:400px;text-align:right;white-space:pre;">0.01</div><div class="t" style="top:610.10px;font-size:11.7px;color:#000;font-family:'Liberation Sans',sans-serif;left:72px;width:400px;text-align:right;white-space:pre;">audusdm</div><div class="t" style="top:610.69px;font-size:11px;color:#000;font-family:'Liberation Sans',sans-serif;left:154px;width:400px;text-align:right;white-space:pre;">0.74508</div><div class="t" style="top:610.69px;font-size:11px;color:#000;font-family:'Liberation Sans',sans-serif;left:236px;width:400px;text-align:right;white-space:pre;">0.00000</div><div class="t" style="top:610.69px;font-size:11px;color:#000;font-family:'Liberation Sans',sans-serif;left:317px;width:400px;text-align:right;white-space:pre;">0.74490</div><div class="t" style="top:610.69px;font-size:11px;color:#000;font-family:'Liberation Sans',sans-serif;left:400px;width:400px;text-align:right;white-space:pre;">0.74506</div><div class="t" style="top:610.69px;font-size:11px;color:#000;font-family:'Liberation Sans',sans-serif;left:482px;width:400px;text-align:right;white-space:pre;">0.00</div><div class="t" style="top:610.69px;font-size:11px;color:#000;font-family:'Liberation Sans',sans-serif;left:564px;width:400px;text-align:right;white-space:pre;">0.00</div><div class="t" style="top:610.69px;font-size:11px;color:#000;font-family:'Liberation Sans',sans-serif;left:668px;width:400px;text-align:right;white-space:pre;">0.02</div><div class="t" style="top:610.10px;font-size:11.7px;color:#000;font-family:'Liberation Sans',sans-serif;left:941px;width:400px;text-align:right;white-space:pre;">Kira-h</div><svg class="r" style="left:1076px;top:612px" width="9" height="9" viewBox="0 0 9 9"><path d="M1 1 L8 8 M8 1 L1 8" stroke="#9a9a9a" stroke-width="1.7"/></svg><svg class="r" style="left:19px;top:629px" width="15" height="15" viewBox="0 0 15 15"><path d="M0.5 0.5 h7 l3 3 v10 h-10 z" fill="#fbfbfb" stroke="#6a6a6a"/><path d="M7.5 0.5 v3 h3" fill="none" stroke="#6a6a6a"/><circle cx="10.5" cy="11" r="3.6" fill="#e8400f" stroke="#fff" stroke-width="0.6"/></svg><div class="t" style="top:630.69px;font-size:11px;color:#000;font-family:'Liberation Sans',sans-serif;left:38.5px;white-space:pre;">27891720</div><div class="t" style="top:630.69px;font-size:11px;color:#000;font-family:'Liberation Sans',sans-serif;left:-133px;width:400px;text-align:right;white-space:pre;">2021.11.02 14:39:32</div><div class="t" style="top:630.10px;font-size:11.7px;color:#000;font-family:'Liberation Sans',sans-serif;left:-59px;width:400px;text-align:right;white-space:pre;">sell</div><div class="t" style="top:630.69px;font-size:11px;color:#000;font-family:'Liberation Sans',sans-serif;left:-2px;width:400px;text-align:right;white-space:pre;">0.01</div><div class="t" style="top:630.10px;font-size:11.7px;color:#000;font-family:'Liberation Sans',sans-serif;left:72px;width:400px;text-align:right;white-space:pre;">audusdm</div><div class="t" style="top:630.69px;font-size:11px;color:#000;font-family:'Liberation Sans',sans-serif;left:154px;width:400px;text-align:right;white-space:pre;">0.74509</div><div class="t" style="top:630.69px;font-size:11px;color:#000;font-family:'Liberation Sans',sans-serif;left:236px;width:400px;text-align:right;white-space:pre;">0.00000</div><div class="t" style="top:630.69px;font-size:11px;color:#000;font-family:'Liberation Sans',sans-serif;left:317px;width:400px;text-align:right;white-space:pre;">0.74490</div><div class="t" style="top:630.69px;font-size:11px;color:#000;font-family:'Liberation Sans',sans-serif;left:400px;width:400px;text-align:right;white-space:pre;">0.74506</div><div class="t" style="top:630.69px;font-size:11px;color:#000;font-family:'Liberation Sans',sans-serif;left:482px;width:400px;text-align:right;white-space:pre;">0.00</div><div class="t" style="top:630.69px;font-size:11px;color:#000;font-family:'Liberation Sans',sans-serif;left:564px;width:400px;text-align:right;white-space:pre;">0.00</div><div class="t" style="top:630.69px;font-size:11px;color:#000;font-family:'Liberation Sans',sans-serif;left:668px;width:400px;text-align:right;white-space:pre;">0.03</div><div class="t" style="top:630.10px;font-size:11.7px;color:#000;font-family:'Liberation Sans',sans-serif;left:941px;width:400px;text-align:right;white-space:pre;">Kira-h</div><svg class="r" style="left:1076px;top:632px" width="9" height="9" viewBox="0 0 9 9"><path d="M1 1 L8 8 M8 1 L1 8" stroke="#9a9a9a" stroke-width="1.7"/></svg><svg class="r" style="left:19px;top:649px" width="15" height="15" viewBox="0 0 15 15"><path d="M0.5 0.5 h7 l3 3 v10 h-10 z" fill="#fbfbfb" stroke="#6a6a6a"/><path d="M7.5 0.5 v3 h3" fill="none" stroke="#6a6a6a"/><circle cx="10.5" cy="11" r="3.6" fill="#e8400f" stroke="#fff" stroke-width="0.6"/></svg><div class="t" style="top:650.69px;font-size:11px;color:#000;font-family:'Liberation Sans',sans-serif;left:38.5px;white-space:pre;">27891729</div><div class="t" style="top:650.69px;font-size:11px;color:#000;font-family:'Liberation Sans',sans-serif;left:-133px;width:400px;text-align:right;white-space:pre;">2021.11.02 14:39:36</div><div class="t" style="top:650.10px;font-size:11.7px;color:#000;font-family:'Liberation Sans',sans-serif;left:-59px;width:400px;text-align:right;white-space:pre;">sell</div><div class="t" style="top:650.69px;font-size:11px;color:#000;font-family:'Liberation Sans',sans-serif;left:-2px;width:400px;text-align:right;white-space:pre;">0.01</div><div class="t" style="top:650.10px;font-size:11.7px;color:#000;font-family:'Liberation Sans',sans-serif;left:72px;width:400px;text-align:right;white-space:pre;">audusdm</div><div class="t" style="top:650.69px;font-size:11px;color:#000;font-family:'Liberation Sans',sans-serif;left:154px;width:400px;text-align:right;white-space:pre;">0.74512</div><div class="t" style="top:650.69px;font-size:11px;color:#000;font-family:'Liberation Sans',sans-serif;left:236px;width:400px;text-align:right;white-space:pre;">0.00000</div><div class="t" style="top:650.69px;font-size:11px;color:#000;font-family:'Liberation Sans',sans-serif;left:317px;width:400px;text-align:right;white-space:pre;">0.74490</div><div class="t" style="top:650.69px;font-size:11px;color:#000;font-family:'Liberation Sans',sans-serif;left:400px;width:400px;text-align:right;white-space:pre;">0.74506</div><div class="t" style="top:650.69px;font-size:11px;color:#000;font-family:'Liberation Sans',sans-serif;left:482px;width:400px;text-align:right;white-space:pre;">0.00</div><div class="t" style="top:650.69px;font-size:11px;color:#000;font-family:'Liberation Sans',sans-serif;left:564px;width:400px;text-align:right;white-space:pre;">0.00</div><div class="t" style="top:650.69px;font-size:11px;color:#000;font-family:'Liberation Sans',sans-serif;left:668px;width:400px;text-align:right;white-space:pre;">0.06</div><div class="t" style="top:650.10px;font-size:11.7px;color:#000;font-family:'Liberation Sans',sans-serif;left:941px;width:400px;text-align:right;white-space:pre;">Kira-h</div><svg class="r" style="left:1076px;top:652px" width="9" height="9" viewBox="0 0 9 9"><path d="M1 1 L8 8 M8 1 L1 8" stroke="#9a9a9a" stroke-width="1.7"/></svg><svg class="r" style="left:19px;top:669px" width="15" height="15" viewBox="0 0 15 15"><path d="M0.5 0.5 h7 l3 3 v10 h-10 z" fill="#fbfbfb" stroke="#6a6a6a"/><path d="M7.5 0.5 v3 h3" fill="none" stroke="#6a6a6a"/><circle cx="10.5" cy="11" r="3.6" fill="#e8400f" stroke="#fff" stroke-width="0.6"/></svg><div class="t" style="top:670.69px;font-size:11px;color:#000;font-family:'Liberation Sans',sans-serif;left:38.5px;white-space:pre;">27891731</div><div class="t" style="top:670.69px;font-size:11px;color:#000;font-family:'Liberation Sans',sans-serif;left:-133px;width:400px;text-align:right;white-space:pre;">2021.11.02 14:39:37</div><div class="t" style="top:670.10px;font-size:11.7px;color:#000;font-family:'Liberation Sans',sans-serif;left:-59px;width:400px;text-align:right;white-space:pre;">sell</div><div class="t" style="top:670.69px;font-size:11px;color:#000;font-family:'Liberation Sans',sans-serif;left:-2px;width:400px;text-align:right;white-space:pre;">0.01</div><div class="t" style="top:670.10px;font-size:11.7px;color:#000;font-family:'Liberation Sans',sans-serif;left:72px;width:400px;text-align:right;white-space:pre;">audusdm</div><div class="t" style="top:670.69px;font-size:11px;color:#000;font-family:'Liberation Sans',sans-serif;left:154px;width:400px;text-align:right;white-space:pre;">0.74512</div><div class="t" style="top:670.69px;font-size:11px;color:#000;font-family:'Liberation Sans',sans-serif;left:236px;width:400px;text-align:right;white-space:pre;">0.00000</div><div class="t" style="top:670.69px;font-size:11px;color:#000;font-family:'Liberation Sans',sans-serif;left:317px;width:400px;text-align:right;white-space:pre;">0.74490</div><div class="t" style="top:670.69px;font-size:11px;color:#000;font-family:'Liberation Sans',sans-serif;left:400px;width:400px;text-align:right;white-space:pre;">0.74506</div><div class="t" style="top:670.69px;font-size:11px;color:#000;font-family:'Liberation Sans',sans-serif;left:482px;width:400px;text-align:right;white-space:pre;">0.00</div><div class="t" style="top:670.69px;font-size:11px;color:#000;font-family:'Liberation Sans',sans-serif;left:564px;width:400px;text-align:right;white-space:pre;">0.00</div><div class="t" style="top:670.69px;font-size:11px;color:#000;font-family:'Liberation Sans',sans-serif;left:668px;width:400px;text-align:right;white-space:pre;">0.06</div><div class="t" style="top:670.10px;font-size:11.7px;color:#000;font-family:'Liberation Sans',sans-serif;left:941px;width:400px;text-align:right;white-space:pre;">Kira-h</div><svg class="r" style="left:1076px;top:672px" width="9" height="9" viewBox="0 0 9 9"><path d="M1 1 L8 8 M8 1 L1 8" stroke="#9a9a9a" stroke-width="1.7"/></svg><div class="r" style="left:1345px;top:262px;width:18px;height:418px;background:#f0f0f0;"></div><div class="r" style="left:1346px;top:279px;width:15px;height:54px;background:#cdcdcd;"></div><svg class="r" style="left:1349px;top:267px" width="9" height="8" viewBox="0 0 9 8"><path d="M1 6 L4.5 2 L8 6" stroke="#606060" stroke-width="2" fill="none"/></svg><svg class="r" style="left:1349px;top:667px" width="9" height="8" viewBox="0 0 9 8"><path d="M1 1.5 L4.5 5.5 L8 1.5" stroke="#606060" stroke-width="2" fill="none"/></svg><div class="r" style="left:15px;top:680px;width:1351px;height:24px;background:#f0f0f0;"></div><div class="r" style="left:18px;top:679px;width:1344px;height:1px;background:#000;"></div><div class="r" style="left:18px;top:680px;width:1344px;height:1px;background:#707070;"></div><div class="r" style="left:18px;top:680px;width:49px;height:19px;background:#fff;border:1px solid #1a1a1a;border-top:none;border-bottom-width:2px;border-right-width:2px;box-sizing:border-box;"></div><div class="t" style="top:683.43px;font-size:10.6px;color:#000;font-family:'Liberation Sans',sans-serif;left:29.3px;white-space:nowrap;transform:scaleX(0.963);transform-origin:0 0;">Trade</div><div class="t" style="top:682.86px;font-size:11.27px;color:#6d6d6d;font-family:'Liberation Sans',sans-serif;left:77px;white-space:nowrap;transform:scaleX(1.000);transform-origin:0 0;">Exposure</div><div class="t" style="top:682.58px;font-size:11.6px;color:#6d6d6d;font-family:'Liberation Sans',sans-serif;left:145px;white-space:nowrap;transform:scaleX(1.096);transform-origin:0 0;">Account History</div><div class="t" style="top:682.92px;font-size:11.2px;color:#6d6d6d;font-family:'Liberation Sans',sans-serif;left:252px;white-space:nowrap;transform:scaleX(1.000);transform-origin:0 0;">News</div><div class="t" style="top:682.58px;font-size:11.6px;color:#6d6d6d;font-family:'Liberation Sans',sans-serif;left:300.6px;white-space:nowrap;transform:scaleX(1.005);transform-origin:0 0;">Alerts</div><div class="t" style="top:682.58px;font-size:11.6px;color:#6d6d6d;font-family:'Liberation Sans',sans-serif;left:350.5px;white-space:nowrap;transform:scaleX(1.013);transform-origin:0 0;">Mailbox</div><div class="t" style="top:682.58px;font-size:11.6px;color:#6d6d6d;font-family:'Liberation Sans',sans-serif;left:419.8px;white-space:nowrap;transform:scaleX(1.069);transform-origin:0 0;">Market</div><div class="t" style="top:682.58px;font-size:11.6px;color:#6d6d6d;font-family:'Liberation Sans',sans-serif;left:494px;white-space:nowrap;transform:scaleX(1.012);transform-origin:0 0;">Articles</div><div class="t" style="top:683.32px;font-size:10.73px;color:#6d6d6d;font-family:'Liberation Sans',sans-serif;left:553.6px;white-space:nowrap;transform:scaleX(1.000);transform-origin:0 0;">Code Base</div><div class="t" style="top:682.94px;font-size:11.18px;color:#6d6d6d;font-family:'Liberation Sans',sans-serif;left:627.3px;white-space:nowrap;transform:scaleX(1.000);transform-origin:0 0;">Experts</div><div class="t" style="top:682.58px;font-size:11.6px;color:#6d6d6d;font-family:'Liberation Sans',sans-serif;left:685.3px;white-space:nowrap;transform:scaleX(1.025);transform-origin:0 0;">Journal</div><div class="t" style="top:688.46px;font-size:9.5px;color:#e8202a;font-family:'Liberation Sans',sans-serif;left:394px;font-weight:bold;">6</div><div class="t" style="top:688.46px;font-size:9.5px;color:#e8202a;font-family:'Liberation Sans',sans-serif;left:459px;font-weight:bold;letter-spacing:-0.3px;">139</div><div class="r" style="left:135px;top:684px;width:1px;height:12px;background:#6d6d6d;"></div><div class="r" style="left:241px;top:684px;width:1px;height:12px;background:#6d6d6d;"></div><div class="r" style="left:291px;top:684px;width:1px;height:12px;background:#6d6d6d;"></div><div class="r" style="left:340px;top:684px;width:1px;height:12px;background:#6d6d6d;"></div><div class="r" style="left:411px;top:684px;width:1px;height:12px;background:#6d6d6d;"></div><div class="r" style="left:485px;top:684px;width:1px;height:12px;background:#6d6d6d;"></div><div class="r" style="left:543px;top:684px;width:1px;height:12px;background:#6d6d6d;"></div><div class="r" style="left:618px;top:684px;width:1px;height:12px;background:#6d6d6d;"></div><div class="r" style="left:676px;top:684px;width:1px;height:12px;background:#6d6d6d;"></div><div class="r" style="left:733px;top:684px;width:1px;height:12px;background:#6d6d6d;"></div><div class="r" style="left:0px;top:701px;width:1366px;height:1px;background:#fafafa;"></div><div class="r" style="left:0px;top:702px;width:1366px;height:2px;background:#d8d8d8;"></div><div class="r" style="left:1363px;top:262px;width:1px;height:440px;background:#fafafa;"></div><div class="r" style="left:0px;top:705px;width:1366px;height:23px;background:#f0f0f0;"></div><div class="t" style="top:712.18px;font-size:11.6px;color:#000;font-family:'Liberation Sans',sans-serif;left:2.5px;">Trading orders page</div><div class="r" style="left:672px;top:706px;width:1px;height:21px;background:#c8c8c8;"></div><div class="r" style="left:788px;top:706px;width:1px;height:21px;background:#c8c8c8;"></div><div class="r" style="left:890px;top:706px;width:1px;height:21px;background:#c8c8c8;"></div><div class="r" style="left:961px;top:706px;width:1px;height:21px;background:#c8c8c8;"></div><div class="r" style="left:1033px;top:706px;width:1px;height:21px;background:#c8c8c8;"></div><div class="r" style="left:1101px;top:706px;width:1px;height:21px;background:#c8c8c8;"></div><div class="r" style="left:1170px;top:706px;width:1px;height:21px;background:#c8c8c8;"></div><div class="r" style="left:1237px;top:706px;width:1px;height:21px;background:#c8c8c8;"></div><div class="t" style="top:712.18px;font-size:11.6px;color:#000;font-family:'Liberation Sans',sans-serif;left:679px;">Default</div><svg class="r" style="left:1242px;top:711px" width="21" height="13" viewBox="0 0 21 13"><rect x="0" y="0" width="1" height="13" fill="#4a8a20"/><rect x="2" y="0" width="1" height="13" fill="#4a8a20"/><rect x="4" y="0" width="1" height="13" fill="#4a8a20"/><rect x="6" y="0" width="1" height="13" fill="#4a8a20"/><rect x="8" y="0" width="1" height="13" fill="#4a8a20"/><rect x="10" y="0" width="1" height="13" fill="#2a4a8a"/><rect x="12" y="0" width="1" height="13" fill="#2a4a8a"/><rect x="14" y="0" width="1" height="13" fill="#2a4a8a"/><rect x="16" y="0" width="1" height="13" fill="#2a4a8a"/><rect x="18" y="0" width="1" height="13" fill="#2a4a8a"/><rect x="20" y="0" width="1" height="13" fill="#2a4a8a"/></svg><div class="t" style="top:712.52px;font-size:11.2px;color:#000;font-family:'Liberation Sans',sans-serif;left:1269.5px;">1508/183 kb</div><div class="r" style="left:0px;top:728px;width:1366px;height:40px;background:;background:linear-gradient(90deg,#22363f 0%,#22363f 45%,#1f3042 70%,#1c2a45 100%);"></div><div class="r" style="left:0px;top:768px;width:1366px;height:74px;background:#fff;"></div><svg class="r" style="left:16px;top:740px" width="17" height="16" viewBox="0 0 17 16"><path d="M0 1.2 L6 0.6 V7 H0 Z M7 0.5 L16 -0.5 V7 H7 Z M0 8 H6 V14.4 L0 13.8 Z M7 8 H16 V16.5 L7 15.5 Z" fill="#fff"/></svg><svg class="r" style="left:63px;top:739px" width="18" height="18" viewBox="0 0 18 18"><circle cx="11" cy="7" r="5.5" fill="none" stroke="#fff" stroke-width="1.4"/><path d="M7 11 L1 17" stroke="#fff" stroke-width="1.5"/></svg><svg class="r" style="left:111px;top:739px" width="18" height="18" viewBox="0 0 18 18"><circle cx="9" cy="9" r="6.8" fill="none" stroke="#fff" stroke-width="2.2"/></svg><svg class="r" style="left:160px;top:739px" width="17" height="17" viewBox="0 0 17 17"><path d="M0 1 H11 M0 16 H11" stroke="#fff" stroke-width="1.2"/><rect x="1.5" y="4.5" width="9" height="8" fill="none" stroke="#fff" stroke-width="1.3"/><path d="M14.5 1 V3.5 M14.5 6 V11 M14.5 13.5 V16" stroke="#fff" stroke-width="1.5"/></svg><svg class="r" style="left:206px;top:736px" width="26" height="24" viewBox="0 0 26 24"><path d="M13 0 L26 8 V24 H0 V8 Z" fill="#0a64c0"/><path d="M3 7 H23 V14 L13 19 L3 14 Z" fill="#fff"/><path d="M0 9 L13 17 L26 9 V24 H0 Z" fill="#28a8ea"/><path d="M0 24 L13 15 L26 24 Z" fill="#50c0f5"/></svg><svg class="r" style="left:254px;top:737px" width="23" height="23" viewBox="0 0 24 24"><circle cx="12" cy="12" r="11.5" fill="#db4437"/><path d="M12 12 L1.6 6 A11.5 11.5 0 0 0 12 23.5 Z" fill="#0f9d58"/><path d="M12 12 L12 23.5 A11.5 11.5 0 0 0 22.4 6 Z" fill="#ffcd40"/><circle cx="12" cy="12" r="5.5" fill="#fff"/><circle cx="12" cy="12" r="4.3" fill="#4285f4"/></svg><div class="t" style="top:741.93px;font-size:11.9px;color:#fff;font-family:'Liberation Sans',sans-serif;left:282.5px;">WebTerminal for th...</div><div class="r" style="left:248px;top:766px;width:152px;height:2px;background:#76b9ed;"></div><svg class="r" style="left:417px;top:736px" width="23" height="24" viewBox="0 0 23 24"><path d="M7 5 V2 Q7 0 9 0 H14 Q16 0 16 2 V5" fill="none" stroke="#e8e8e8" stroke-width="1.6"/><rect x="0" y="5" width="23" height="19" fill="#f0f0f0"/><rect x="7" y="10" width="4" height="4" fill="#f25022"/><rect x="12" y="10" width="4" height="4" fill="#7fba00"/><rect x="7" y="15" width="4" height="4" fill="#00a4ef"/><rect x="12" y="15" width="4" height="4" fill="#ffb900"/></svg><svg class="r" style="left:464px;top:736px" width="24" height="24" viewBox="0 0 24 24"><rect width="24" height="24" fill="#d41a1f"/><path d="M12 3 L20 7.5 V16.5 L12 21 L4 16.5 V7.5 Z" fill="#fff"/><path d="M12 8 L16 10.3 V13.7 L12 16 L8 13.7 V10.3 Z" fill="#d41a1f"/><path d="M6 15 L15 7 L18 9 L9 17 Z" fill="#d41a1f"/></svg><div class="t" style="top:742.27px;font-size:11.5px;color:#fff;font-family:'Liberation Sans',sans-serif;left:492px;">10223275: Tickmill-...</div><div class="r" style="left:458px;top:766px;width:152px;height:2px;background:#76b9ed;"></div><svg class="r" style="left:625px;top:736px" width="24" height="24" viewBox="0 0 24 24"><rect width="24" height="24" fill="#0a0a0a"/><text x="11" y="12" font-size="11" font-family="Liberation Sans" font-weight="bold" fill="#8cc83c">IC</text><path d="M3 18 Q12 12 22 15" stroke="#fff" stroke-width="1.5" fill="none"/><path d="M5 15 v2 M7 13 v4 M9 12 v5" stroke="#ddd" stroke-width="1"/></svg><div class="t" style="top:742.52px;font-size:11.2px;color:#fff;font-family:'Liberation Sans',sans-serif;left:653.6px;">1400085341: ICMar...</div><div class="r" style="left:619px;top:766px;width:152px;height:2px;background:#76b9ed;"></div><div class="r" style="left:776px;top:728px;width:160px;height:40px;background:#435561;"></div><svg class="r" style="left:786px;top:738px" width="24" height="20" viewBox="0 0 24 20"><path d="M10 2 L24 0 V12 L10 13 Z" fill="#1a4a9a"/><path d="M0 6 L13 5 V19 L0 19 Z" fill="#2a9ad8"/></svg><div class="t" style="top:742.69px;font-size:11px;color:#fff;font-family:'Liberation Sans',sans-serif;left:814.6px;">1234968949: ICMCa...</div><div class="r" style="left:776px;top:766px;width:160px;height:2px;background:#76b9ed;"></div><svg class="r" style="left:1024px;top:739px" width="19" height="19" viewBox="0 0 19 19"><defs><radialGradient id="sun" cx="0.4" cy="0.35" r="0.7"><stop offset="0" stop-color="#ffe070"/><stop offset="1" stop-color="#f5a000"/></radialGradient></defs><circle cx="9.5" cy="9.5" r="9.3" fill="url(#sun)"/></svg><div class="t" style="top:742.08px;font-size:12.9px;color:#fff;font-family:'Liberation Sans',sans-serif;left:1053.6px;">80°F</div><svg class="r" style="left:1098px;top:742px" width="14" height="9" viewBox="0 0 14 9"><path d="M1 8 L7 2 L13 8" stroke="#fff" stroke-width="1.3" fill="none"/></svg><svg class="r" style="left:1123px;top:740px" width="13" height="16" viewBox="0 0 13 16"><rect x="1" y="4" width="7" height="8" rx="3" fill="none" stroke="#fff" stroke-width="1.1"/><path d="M8 7 L12 5 V11 L8 9" fill="none" stroke="#fff" stroke-width="1.1"/><path d="M2 1 Q5 0 8 1 M2 15 Q5 16 8 15" stroke="#fff" fill="none"/></svg><svg class="r" style="left:1146px;top:743px" width="16" height="10" viewBox="0 0 16 10"><rect x="0.75" y="0.75" width="12.5" height="8.5" fill="none" stroke="#fff" stroke-width="1.4"/><rect x="2.5" y="2.5" width="5" height="5" fill="#fff"/><rect x="14" y="3" width="2" height="4" fill="#fff"/></svg><svg class="r" style="left:1171px;top:741px" width="15" height="15" viewBox="0 0 15 15"><path d="M1 14 A13 13 0 0 1 14 1 M4 14 A10 10 0 0 1 14 4 M7 14 A7 7 0 0 1 14 7" stroke="#fff" fill="none" stroke-width="1.2"/><circle cx="12" cy="12" r="2" fill="#fff"/></svg><svg class="r" style="left:1192px;top:740px" width="18" height="17" viewBox="0 0 18 17"><path d="M1 6 H4 L9 1.5 V15.5 L4 11 H1 Z" fill="none" stroke="#fff" stroke-width="1.2"/><path d="M11.5 5.5 Q13 8.5 11.5 11.5 M13.5 3.5 Q16 8.5 13.5 13.5" stroke="#fff" fill="none" stroke-width="1" opacity="0.7"/></svg><div class="t" style="top:744.03px;font-size:10.6px;color:#fff;font-family:'Liberation Sans',sans-serif;left:1219px;">ENG</div><div class="t" style="top:732.93px;font-size:11.3px;color:#fff;font-family:'Liberation Sans',sans-serif;left:1260px;">4:41 PM</div><div class="t" style="top:751.35px;font-size:11.4px;color:#fff;font-family:'Liberation Sans',sans-serif;left:1256px;">11/2/2021</div><svg class="r" style="left:1324px;top:739px" width="28" height="27" viewBox="0 0 28 27"><path d="M1 1 H17 V13 H8 L4 17 V13 H1 Z" fill="#fff"/><path d="M4 4.5 H14 M4 7.5 H14 M4 10.5 H12" stroke="#1c2a45" stroke-width="1.2"/><circle cx="17" cy="16.5" r="8" fill="#2e2e2e" stroke="#707070" stroke-width="1.3"/><text x="13.4" y="20.8" font-size="12" font-family="Liberation Sans" fill="#fff">5</text></svg><div class="r" style="left:1362px;top:728px;width:1px;height:40px;background:#5a6a80;"></div>
</body></html>
